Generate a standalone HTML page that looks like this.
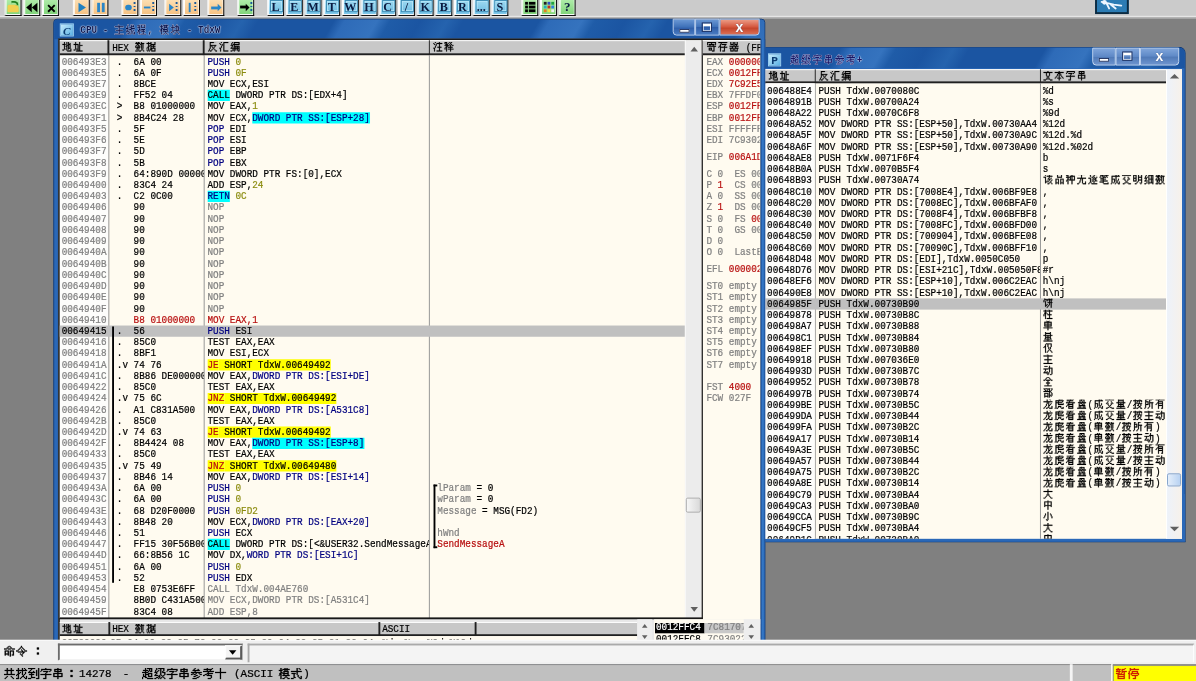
<!DOCTYPE html>
<html><head><meta charset="utf-8"><title>OllyDbg</title>
<style>
html,body{margin:0;padding:0;overflow:hidden;width:1196px;height:681px;background:#808080}
#root{position:absolute;left:0;top:0;width:1280px;height:728px;transform:scale(0.934375,0.93544);transform-origin:0 0;background:#808080;overflow:hidden}
#root div{position:absolute;box-sizing:border-box}
.m{font-family:"Liberation Mono",monospace;font-size:11.67px;line-height:12px;white-space:pre;overflow:hidden;color:#000}
.cj{width:12px;height:12px;vertical-align:top;fill:currentColor;display:inline-block;margin-right:0}
.g{color:#808080}
.k{color:#000}
.nv{color:#000080}
.ol{color:#8c8c10}
.rd{color:#ff0000}
.dr{color:#b81010}
.cy{background:#00ffff}
.yl{background:#ffff00}
.sel{background:#c0c0c0}
.hdr{background:#c8c8c8;border-top:1px solid #fff;border-bottom:2px solid #202020}
.vd{background:#202020}
.ic{position:absolute;left:0;top:0;width:13px;height:13px;font:bold 12px "Liberation Serif",serif;color:#0a3a70;text-align:center;line-height:14px;font-style:italic}
.ttl{font-family:"Liberation Mono",monospace;font-size:11.67px;font-weight:bold;line-height:12px;white-space:pre;color:#0c1850;text-shadow:0 0 1px #e8f0ff,0 0 1px #e8f0ff,0 0 2px #b0c8f0}
.ttl .cj{width:14px;filter:drop-shadow(0 0 0.6px #e8f0ff) drop-shadow(0 0 0.6px #c8dcff)}
.bmin{position:absolute;left:6px;top:10px;width:11px;height:4px;background:#fff;border:1px solid #1c3060}
.bmax{position:absolute;left:6px;top:3px;width:11px;height:10px;border:1px solid #1c3060;background:transparent;box-shadow:inset 0 3px 0 #fff,inset 0 -1px 0 #fff,inset 1px 0 0 #fff,inset -1px 0 0 #fff}
.bx{position:absolute;left:0;top:0;width:100%;text-align:center;font:bold 15px/16px "Liberation Sans",sans-serif;color:#fff;text-shadow:0 0 1px #304070}
.tbl{position:absolute;left:0;top:0;width:100%;text-align:center;font:bold 13px/19px "Liberation Serif",serif;color:#0a1a40}
.arr{position:absolute;width:0;height:0;border-left:5px solid transparent;border-right:5px solid transparent}
.arr.up{border-bottom:5px solid #606060}
.arr.dn{border-top:5px solid #606060}
.emp{font-family:"Liberation Serif",serif;font-size:10px}
.sx{display:inline-block;transform:scaleX(0.857143);transform-origin:0 0;white-space:pre}
.sx .cj{width:14px}
.tri{position:absolute;width:0;height:0;border-style:solid}
.tri.l{border-width:4px 6px 4px 0;border-color:transparent #000 transparent transparent}
.tri.r{border-width:4px 0 4px 6px;border-color:transparent transparent transparent #000}
.s13{font-family:"Liberation Mono",monospace;font-size:11.67px;line-height:14px;white-space:pre;color:#000}
.s13 .cj{width:13px;height:13px}
.m,.s13{-webkit-text-stroke:0.25px currentColor}
.cj{stroke:currentColor;stroke-width:0.25px}
.m .cj{position:relative;top:-1px}

</style></head><body>
<svg width="0" height="0" style="position:absolute"><defs><symbol id="u4e3b" viewBox="0 0 12 12"><path d="M4 0h1v1h-1zM5 1h1v1h-1zM0 2h11v1h-11zM5 3h1v1h-1zM5 4h1v1h-1zM5 5h1v1h-1zM1 6h9v1h-9zM5 7h1v1h-1zM5 8h1v1h-1zM5 9h1v1h-1zM0 10h11v1h-11z"/></symbol><symbol id="u7ebf" viewBox="0 0 12 12"><path d="M2 0h1v1h-1zM6 0h1v1h-1zM8 0h1v1h-1zM2 1h1v1h-1zM6 1h1v1h-1zM9 1h1v1h-1zM1 2h1v1h-1zM6 2h4v1h-4zM1 3h1v1h-1zM4 3h3v1h-3zM0 4h3v1h-3zM6 4h5v1h-5zM2 5h1v1h-1zM4 5h3v1h-3zM1 6h1v1h-1zM6 6h1v1h-1zM9 6h1v1h-1zM0 7h4v1h-4zM6 7h1v1h-1zM8 7h1v1h-1zM4 8h1v1h-1zM7 8h1v1h-1zM10 8h1v1h-1zM2 9h2v1h-2zM6 9h1v1h-1zM8 9h1v1h-1zM10 9h1v1h-1zM0 10h2v1h-2zM4 10h2v1h-2zM9 10h2v1h-2z"/></symbol><symbol id="u7a0b" viewBox="0 0 12 12"><path d="M3 0h1v1h-1zM5 0h5v1h-5zM0 1h3v1h-3zM5 1h1v1h-1zM9 1h1v1h-1zM2 2h1v1h-1zM5 2h1v1h-1zM9 2h1v1h-1zM0 3h4v1h-4zM5 3h5v1h-5zM2 4h1v1h-1zM2 5h2v1h-2zM5 5h5v1h-5zM1 6h2v1h-2zM4 6h1v1h-1zM7 6h1v1h-1zM1 7h2v1h-2zM5 7h5v1h-5zM0 8h1v1h-1zM2 8h1v1h-1zM7 8h1v1h-1zM2 9h1v1h-1zM7 9h1v1h-1zM2 10h1v1h-1zM4 10h7v1h-7z"/></symbol><symbol id="u6a21" viewBox="0 0 12 12"><path d="M2 0h1v1h-1zM6 0h1v1h-1zM8 0h1v1h-1zM2 1h1v1h-1zM4 1h7v1h-7zM0 2h4v1h-4zM6 2h1v1h-1zM8 2h1v1h-1zM2 3h1v1h-1zM5 3h5v1h-5zM2 4h2v1h-2zM5 4h1v1h-1zM9 4h1v1h-1zM1 5h2v1h-2zM4 5h6v1h-6zM1 6h2v1h-2zM5 6h1v1h-1zM9 6h1v1h-1zM0 7h1v1h-1zM2 7h1v1h-1zM4 7h7v1h-7zM2 8h1v1h-1zM7 8h1v1h-1zM2 9h1v1h-1zM6 9h1v1h-1zM8 9h1v1h-1zM2 10h1v1h-1zM4 10h2v1h-2zM9 10h2v1h-2z"/></symbol><symbol id="u5757" viewBox="0 0 12 12"><path d="M2 0h1v1h-1zM7 0h1v1h-1zM2 1h1v1h-1zM7 1h1v1h-1zM2 2h1v1h-1zM5 2h5v1h-5zM0 3h5v1h-5zM7 3h1v1h-1zM9 3h1v1h-1zM2 4h1v1h-1zM7 4h1v1h-1zM9 4h1v1h-1zM2 5h1v1h-1zM7 5h1v1h-1zM9 5h1v1h-1zM2 6h1v1h-1zM4 6h7v1h-7zM2 7h2v1h-2zM7 7h1v1h-1zM0 8h2v1h-2zM6 8h1v1h-1zM8 8h1v1h-1zM5 9h1v1h-1zM9 9h1v1h-1zM3 10h2v1h-2zM10 10h1v1h-1z"/></symbol><symbol id="u5730" viewBox="0 0 12 12"><path d="M2 0h1v1h-1zM7 0h1v1h-1zM2 1h1v1h-1zM5 1h1v1h-1zM7 1h1v1h-1zM2 2h1v1h-1zM5 2h1v1h-1zM7 2h1v1h-1zM9 2h1v1h-1zM0 3h4v1h-4zM5 3h1v1h-1zM7 3h3v1h-3zM2 4h1v1h-1zM5 4h3v1h-3zM9 4h1v1h-1zM2 5h1v1h-1zM4 5h2v1h-2zM7 5h1v1h-1zM9 5h1v1h-1zM2 6h1v1h-1zM5 6h1v1h-1zM7 6h1v1h-1zM9 6h1v1h-1zM2 7h1v1h-1zM5 7h1v1h-1zM7 7h3v1h-3zM2 8h2v1h-2zM5 8h1v1h-1zM7 8h1v1h-1zM10 8h1v1h-1zM0 9h2v1h-2zM5 9h1v1h-1zM10 9h1v1h-1zM6 10h5v1h-5z"/></symbol><symbol id="u5740" viewBox="0 0 12 12"><path d="M2 0h1v1h-1zM7 0h1v1h-1zM2 1h1v1h-1zM7 1h1v1h-1zM2 2h1v1h-1zM7 2h1v1h-1zM0 3h6v1h-6zM7 3h1v1h-1zM2 4h1v1h-1zM5 4h1v1h-1zM7 4h4v1h-4zM2 5h1v1h-1zM5 5h1v1h-1zM7 5h1v1h-1zM2 6h1v1h-1zM5 6h1v1h-1zM7 6h1v1h-1zM2 7h1v1h-1zM5 7h1v1h-1zM7 7h1v1h-1zM2 8h4v1h-4zM7 8h1v1h-1zM0 9h2v1h-2zM5 9h1v1h-1zM7 9h1v1h-1zM3 10h8v1h-8z"/></symbol><symbol id="u6570" viewBox="0 0 12 12"><path d="M0 0h1v1h-1zM3 0h1v1h-1zM5 0h1v1h-1zM7 0h1v1h-1zM1 1h1v1h-1zM3 1h2v1h-2zM7 1h1v1h-1zM0 2h6v1h-6zM7 2h4v1h-4zM2 3h2v1h-2zM6 3h2v1h-2zM9 3h1v1h-1zM1 4h1v1h-1zM3 4h2v1h-2zM7 4h1v1h-1zM9 4h1v1h-1zM0 5h1v1h-1zM3 5h1v1h-1zM5 5h1v1h-1zM7 5h1v1h-1zM9 5h1v1h-1zM0 6h6v1h-6zM7 6h1v1h-1zM9 6h1v1h-1zM2 7h1v1h-1zM4 7h1v1h-1zM7 7h1v1h-1zM9 7h1v1h-1zM1 8h2v1h-2zM4 8h1v1h-1zM8 8h1v1h-1zM3 9h1v1h-1zM7 9h1v1h-1zM9 9h1v1h-1zM0 10h3v1h-3zM4 10h3v1h-3zM10 10h1v1h-1z"/></symbol><symbol id="u636e" viewBox="0 0 12 12"><path d="M2 0h1v1h-1zM5 0h6v1h-6zM2 1h1v1h-1zM5 1h1v1h-1zM10 1h1v1h-1zM0 2h6v1h-6zM10 2h1v1h-1zM2 3h1v1h-1zM5 3h6v1h-6zM2 4h1v1h-1zM4 4h2v1h-2zM8 4h1v1h-1zM2 5h2v1h-2zM5 5h6v1h-6zM1 6h2v1h-2zM5 6h1v1h-1zM8 6h1v1h-1zM0 7h1v1h-1zM2 7h1v1h-1zM5 7h6v1h-6zM2 8h1v1h-1zM4 8h3v1h-3zM10 8h1v1h-1zM0 9h1v1h-1zM2 9h1v1h-1zM4 9h1v1h-1zM6 9h1v1h-1zM10 9h1v1h-1zM1 10h1v1h-1zM3 10h1v1h-1zM6 10h5v1h-5z"/></symbol><symbol id="u53cd" viewBox="0 0 12 12"><path d="M7 0h3v1h-3zM2 1h5v1h-5zM2 2h1v1h-1zM2 3h1v1h-1zM2 4h8v1h-8zM2 5h1v1h-1zM4 5h1v1h-1zM8 5h1v1h-1zM2 6h1v1h-1zM5 6h1v1h-1zM7 6h1v1h-1zM2 7h1v1h-1zM6 7h1v1h-1zM1 8h1v1h-1zM5 8h1v1h-1zM7 8h1v1h-1zM1 9h1v1h-1zM4 9h1v1h-1zM8 9h1v1h-1zM0 10h1v1h-1zM2 10h2v1h-2zM9 10h2v1h-2z"/></symbol><symbol id="u6c47" viewBox="0 0 12 12"><path d="M1 0h1v1h-1zM2 1h1v1h-1zM5 1h6v1h-6zM0 2h1v1h-1zM5 2h1v1h-1zM1 3h1v1h-1zM3 3h1v1h-1zM5 3h1v1h-1zM3 4h1v1h-1zM5 4h1v1h-1zM2 5h1v1h-1zM5 5h1v1h-1zM2 6h1v1h-1zM5 6h1v1h-1zM0 7h2v1h-2zM5 7h1v1h-1zM1 8h1v1h-1zM5 8h1v1h-1zM1 9h1v1h-1zM5 9h1v1h-1zM1 10h1v1h-1zM5 10h6v1h-6z"/></symbol><symbol id="u7f16" viewBox="0 0 12 12"><path d="M2 0h1v1h-1zM7 0h1v1h-1zM2 1h1v1h-1zM4 1h7v1h-7zM1 2h1v1h-1zM4 2h1v1h-1zM10 2h1v1h-1zM1 3h1v1h-1zM3 3h8v1h-8zM0 4h3v1h-3zM4 4h1v1h-1zM2 5h1v1h-1zM4 5h7v1h-7zM1 6h1v1h-1zM4 6h1v1h-1zM6 6h1v1h-1zM8 6h1v1h-1zM10 6h1v1h-1zM0 7h11v1h-11zM4 8h1v1h-1zM6 8h1v1h-1zM8 8h1v1h-1zM10 8h1v1h-1zM2 9h3v1h-3zM6 9h1v1h-1zM8 9h1v1h-1zM10 9h1v1h-1zM0 10h2v1h-2zM4 10h1v1h-1zM9 10h2v1h-2z"/></symbol><symbol id="u6ce8" viewBox="0 0 12 12"><path d="M1 0h1v1h-1zM6 0h1v1h-1zM2 1h1v1h-1zM7 1h1v1h-1zM0 2h1v1h-1zM4 2h7v1h-7zM1 3h1v1h-1zM3 3h1v1h-1zM7 3h1v1h-1zM3 4h1v1h-1zM7 4h1v1h-1zM2 5h1v1h-1zM7 5h1v1h-1zM2 6h1v1h-1zM5 6h5v1h-5zM0 7h2v1h-2zM7 7h1v1h-1zM1 8h1v1h-1zM7 8h1v1h-1zM1 9h1v1h-1zM7 9h1v1h-1zM1 10h1v1h-1zM4 10h7v1h-7z"/></symbol><symbol id="u91ca" viewBox="0 0 12 12"><path d="M3 0h7v1h-7zM0 1h3v1h-3zM6 1h1v1h-1zM8 1h1v1h-1zM0 2h1v1h-1zM2 2h1v1h-1zM4 2h1v1h-1zM7 2h1v1h-1zM1 3h3v1h-3zM6 3h1v1h-1zM8 3h1v1h-1zM0 4h6v1h-6zM7 4h1v1h-1zM9 4h2v1h-2zM2 5h2v1h-2zM7 5h1v1h-1zM1 6h2v1h-2zM4 6h6v1h-6zM0 7h1v1h-1zM2 7h1v1h-1zM7 7h1v1h-1zM0 8h1v1h-1zM2 8h1v1h-1zM4 8h7v1h-7zM2 9h1v1h-1zM7 9h1v1h-1zM2 10h1v1h-1zM7 10h1v1h-1z"/></symbol><symbol id="u5bc4" viewBox="0 0 12 12"><path d="M5 0h1v1h-1zM0 1h11v1h-11zM0 2h1v1h-1zM5 2h1v1h-1zM10 2h1v1h-1zM0 3h1v1h-1zM2 3h7v1h-7zM10 3h1v1h-1zM3 4h1v1h-1zM7 4h1v1h-1zM0 5h11v1h-11zM8 6h1v1h-1zM2 7h4v1h-4zM8 7h1v1h-1zM2 8h1v1h-1zM5 8h1v1h-1zM8 8h1v1h-1zM2 9h4v1h-4zM8 9h1v1h-1zM6 10h3v1h-3z"/></symbol><symbol id="u5b58" viewBox="0 0 12 12"><path d="M4 0h1v1h-1zM0 1h11v1h-11zM3 2h1v1h-1zM2 3h1v1h-1zM4 3h6v1h-6zM2 4h1v1h-1zM8 4h1v1h-1zM1 5h2v1h-2zM7 5h1v1h-1zM0 6h1v1h-1zM2 6h9v1h-9zM2 7h1v1h-1zM7 7h1v1h-1zM2 8h1v1h-1zM7 8h1v1h-1zM2 9h1v1h-1zM7 9h1v1h-1zM2 10h1v1h-1zM5 10h3v1h-3z"/></symbol><symbol id="u5668" viewBox="0 0 12 12"><path d="M1 0h4v1h-4zM6 0h4v1h-4zM1 1h1v1h-1zM4 1h1v1h-1zM6 1h1v1h-1zM9 1h1v1h-1zM1 2h1v1h-1zM4 2h1v1h-1zM6 2h1v1h-1zM9 2h1v1h-1zM1 3h4v1h-4zM6 3h4v1h-4zM5 4h1v1h-1zM8 4h1v1h-1zM0 5h11v1h-11zM3 6h1v1h-1zM7 6h1v1h-1zM0 7h5v1h-5zM6 7h5v1h-5zM1 8h1v1h-1zM4 8h1v1h-1zM6 8h1v1h-1zM9 8h1v1h-1zM1 9h1v1h-1zM4 9h1v1h-1zM6 9h1v1h-1zM9 9h1v1h-1zM1 10h4v1h-4zM6 10h4v1h-4z"/></symbol><symbol id="u8d85" viewBox="0 0 12 12"><path d="M3 0h1v1h-1zM5 0h5v1h-5zM3 1h1v1h-1zM7 1h1v1h-1zM9 1h1v1h-1zM1 2h5v1h-5zM7 2h1v1h-1zM9 2h1v1h-1zM3 3h1v1h-1zM6 3h1v1h-1zM8 3h2v1h-2zM0 4h6v1h-6zM3 5h1v1h-1zM6 5h4v1h-4zM1 6h1v1h-1zM3 6h4v1h-4zM9 6h1v1h-1zM1 7h1v1h-1zM3 7h1v1h-1zM6 7h1v1h-1zM9 7h1v1h-1zM1 8h3v1h-3zM6 8h4v1h-4zM0 9h1v1h-1zM3 9h2v1h-2zM0 10h1v1h-1zM5 10h6v1h-6z"/></symbol><symbol id="u7ea7" viewBox="0 0 12 12"><path d="M2 0h1v1h-1zM4 0h6v1h-6zM2 1h1v1h-1zM6 1h1v1h-1zM9 1h1v1h-1zM1 2h1v1h-1zM4 2h1v1h-1zM6 2h1v1h-1zM9 2h1v1h-1zM1 3h1v1h-1zM3 3h1v1h-1zM6 3h1v1h-1zM8 3h1v1h-1zM0 4h3v1h-3zM6 4h1v1h-1zM8 4h3v1h-3zM2 5h1v1h-1zM6 5h1v1h-1zM10 5h1v1h-1zM1 6h1v1h-1zM6 6h1v1h-1zM10 6h1v1h-1zM0 7h4v1h-4zM5 7h1v1h-1zM7 7h1v1h-1zM9 7h1v1h-1zM4 8h2v1h-2zM8 8h1v1h-1zM2 9h2v1h-2zM5 9h1v1h-1zM7 9h1v1h-1zM9 9h1v1h-1zM0 10h2v1h-2zM4 10h1v1h-1zM6 10h1v1h-1zM10 10h1v1h-1z"/></symbol><symbol id="u5b57" viewBox="0 0 12 12"><path d="M5 0h1v1h-1zM1 1h10v1h-10zM1 2h1v1h-1zM10 2h1v1h-1zM0 3h1v1h-1zM3 3h5v1h-5zM9 3h1v1h-1zM6 4h1v1h-1zM5 5h1v1h-1zM0 6h11v1h-11zM5 7h1v1h-1zM5 8h1v1h-1zM5 9h1v1h-1zM3 10h3v1h-3z"/></symbol><symbol id="u4e32" viewBox="0 0 12 12"><path d="M5 0h1v1h-1zM2 1h7v1h-7zM2 2h1v1h-1zM5 2h1v1h-1zM8 2h1v1h-1zM2 3h7v1h-7zM5 4h1v1h-1zM1 5h9v1h-9zM1 6h1v1h-1zM5 6h1v1h-1zM9 6h1v1h-1zM1 7h1v1h-1zM5 7h1v1h-1zM9 7h1v1h-1zM1 8h9v1h-9zM5 9h1v1h-1zM5 10h1v1h-1z"/></symbol><symbol id="u53c2" viewBox="0 0 12 12"><path d="M4 0h1v1h-1zM3 1h1v1h-1zM7 1h1v1h-1zM2 2h7v1h-7zM4 3h1v1h-1zM0 4h11v1h-11zM2 5h1v1h-1zM5 5h1v1h-1zM8 5h1v1h-1zM0 6h2v1h-2zM3 6h2v1h-2zM9 6h2v1h-2zM5 7h2v1h-2zM3 8h2v1h-2zM8 8h1v1h-1zM6 9h2v1h-2zM2 10h4v1h-4z"/></symbol><symbol id="u8003" viewBox="0 0 12 12"><path d="M4 0h1v1h-1zM9 0h1v1h-1zM1 1h8v1h-8zM4 2h1v1h-1zM7 2h1v1h-1zM0 3h11v1h-11zM5 4h1v1h-1zM4 5h6v1h-6zM2 6h2v1h-2zM5 6h1v1h-1zM0 7h2v1h-2zM4 7h5v1h-5zM8 8h1v1h-1zM8 9h1v1h-1zM5 10h3v1h-3z"/></symbol><symbol id="u6587" viewBox="0 0 12 12"><path d="M4 0h1v1h-1zM5 1h1v1h-1zM0 2h11v1h-11zM3 3h1v1h-1zM7 3h1v1h-1zM3 4h1v1h-1zM7 4h1v1h-1zM3 5h1v1h-1zM7 5h1v1h-1zM4 6h1v1h-1zM6 6h1v1h-1zM4 7h1v1h-1zM6 7h1v1h-1zM5 8h1v1h-1zM3 9h2v1h-2zM6 9h2v1h-2zM0 10h3v1h-3zM8 10h3v1h-3z"/></symbol><symbol id="u672c" viewBox="0 0 12 12"><path d="M5 0h1v1h-1zM5 1h1v1h-1zM0 2h11v1h-11zM4 3h3v1h-3zM3 4h1v1h-1zM5 4h1v1h-1zM7 4h1v1h-1zM3 5h1v1h-1zM5 5h1v1h-1zM7 5h1v1h-1zM2 6h1v1h-1zM5 6h1v1h-1zM8 6h1v1h-1zM1 7h1v1h-1zM5 7h1v1h-1zM9 7h1v1h-1zM0 8h1v1h-1zM3 8h5v1h-5zM10 8h1v1h-1zM5 9h1v1h-1zM5 10h1v1h-1z"/></symbol><symbol id="u8be5" viewBox="0 0 12 12"><path d="M1 0h1v1h-1zM6 0h1v1h-1zM2 1h1v1h-1zM7 1h1v1h-1zM4 2h7v1h-7zM0 3h3v1h-3zM7 3h1v1h-1zM2 4h1v1h-1zM6 4h1v1h-1zM9 4h1v1h-1zM2 5h1v1h-1zM5 5h4v1h-4zM2 6h1v1h-1zM7 6h1v1h-1zM10 6h1v1h-1zM2 7h1v1h-1zM4 7h1v1h-1zM6 7h1v1h-1zM9 7h1v1h-1zM2 8h2v1h-2zM5 8h1v1h-1zM8 8h1v1h-1zM2 9h1v1h-1zM7 9h1v1h-1zM9 9h1v1h-1zM5 10h2v1h-2zM10 10h1v1h-1z"/></symbol><symbol id="u54c1" viewBox="0 0 12 12"><path d="M3 0h6v1h-6zM3 1h1v1h-1zM8 1h1v1h-1zM3 2h1v1h-1zM8 2h1v1h-1zM3 3h6v1h-6zM1 5h4v1h-4zM7 5h4v1h-4zM1 6h1v1h-1zM4 6h1v1h-1zM7 6h1v1h-1zM10 6h1v1h-1zM1 7h1v1h-1zM4 7h1v1h-1zM7 7h1v1h-1zM10 7h1v1h-1zM1 8h1v1h-1zM4 8h1v1h-1zM7 8h1v1h-1zM10 8h1v1h-1zM1 9h4v1h-4zM7 9h4v1h-4zM1 10h1v1h-1zM4 10h1v1h-1zM7 10h1v1h-1zM10 10h1v1h-1z"/></symbol><symbol id="u79cd" viewBox="0 0 12 12"><path d="M3 0h2v1h-2zM7 0h1v1h-1zM0 1h3v1h-3zM7 1h1v1h-1zM2 2h1v1h-1zM5 2h6v1h-6zM0 3h6v1h-6zM7 3h1v1h-1zM10 3h1v1h-1zM2 4h1v1h-1zM5 4h1v1h-1zM7 4h1v1h-1zM10 4h1v1h-1zM2 5h2v1h-2zM5 5h1v1h-1zM7 5h1v1h-1zM10 5h1v1h-1zM1 6h2v1h-2zM4 6h7v1h-7zM0 7h1v1h-1zM2 7h1v1h-1zM7 7h1v1h-1zM2 8h1v1h-1zM7 8h1v1h-1zM2 9h1v1h-1zM7 9h1v1h-1zM2 10h1v1h-1zM7 10h1v1h-1z"/></symbol><symbol id="u65e0" viewBox="0 0 12 12"><path d="M1 0h9v1h-9zM5 1h1v1h-1zM5 2h1v1h-1zM5 3h1v1h-1zM0 4h11v1h-11zM4 5h1v1h-1zM6 5h1v1h-1zM4 6h1v1h-1zM6 6h1v1h-1zM3 7h1v1h-1zM6 7h1v1h-1zM3 8h1v1h-1zM6 8h1v1h-1zM10 8h1v1h-1zM2 9h1v1h-1zM6 9h1v1h-1zM10 9h1v1h-1zM0 10h2v1h-2zM7 10h4v1h-4z"/></symbol><symbol id="u9010" viewBox="0 0 12 12"><path d="M1 0h1v1h-1zM4 0h7v1h-7zM2 1h1v1h-1zM7 1h1v1h-1zM2 2h1v1h-1zM6 2h1v1h-1zM4 3h2v1h-2zM7 3h1v1h-1zM10 3h1v1h-1zM0 4h3v1h-3zM6 4h1v1h-1zM8 4h2v1h-2zM2 5h1v1h-1zM4 5h2v1h-2zM7 5h2v1h-2zM2 6h1v1h-1zM6 6h1v1h-1zM8 6h2v1h-2zM2 7h1v1h-1zM4 7h2v1h-2zM8 7h1v1h-1zM10 7h1v1h-1zM2 8h1v1h-1zM6 8h2v1h-2zM1 9h1v1h-1zM3 9h1v1h-1zM0 10h1v1h-1zM4 10h7v1h-7z"/></symbol><symbol id="u7b14" viewBox="0 0 12 12"><path d="M1 0h1v1h-1zM6 0h1v1h-1zM1 1h4v1h-4zM6 1h5v1h-5zM1 2h1v1h-1zM3 2h1v1h-1zM5 2h1v1h-1zM8 2h1v1h-1zM0 3h1v1h-1zM4 3h4v1h-4zM9 3h1v1h-1zM1 4h4v1h-4zM4 5h4v1h-4zM1 6h4v1h-4zM4 7h6v1h-6zM0 8h5v1h-5zM4 9h1v1h-1zM10 9h1v1h-1zM5 10h6v1h-6z"/></symbol><symbol id="u6210" viewBox="0 0 12 12"><path d="M6 0h1v1h-1zM8 0h1v1h-1zM6 1h1v1h-1zM9 1h1v1h-1zM1 2h10v1h-10zM1 3h1v1h-1zM6 3h1v1h-1zM1 4h1v1h-1zM6 4h1v1h-1zM1 5h4v1h-4zM6 5h1v1h-1zM9 5h1v1h-1zM1 6h1v1h-1zM4 6h1v1h-1zM6 6h1v1h-1zM9 6h1v1h-1zM1 7h1v1h-1zM4 7h1v1h-1zM6 7h1v1h-1zM8 7h1v1h-1zM1 8h1v1h-1zM4 8h1v1h-1zM7 8h1v1h-1zM10 8h1v1h-1zM1 9h1v1h-1zM3 9h1v1h-1zM6 9h1v1h-1zM8 9h1v1h-1zM10 9h1v1h-1zM0 10h1v1h-1zM5 10h1v1h-1zM9 10h2v1h-2z"/></symbol><symbol id="u4ea4" viewBox="0 0 12 12"><path d="M5 0h1v1h-1zM0 1h11v1h-11zM3 3h1v1h-1zM7 3h1v1h-1zM2 4h1v1h-1zM8 4h1v1h-1zM1 5h1v1h-1zM3 5h1v1h-1zM7 5h1v1h-1zM9 5h1v1h-1zM3 6h1v1h-1zM7 6h1v1h-1zM4 7h1v1h-1zM6 7h1v1h-1zM5 8h1v1h-1zM3 9h2v1h-2zM6 9h2v1h-2zM1 10h2v1h-2zM8 10h3v1h-3z"/></symbol><symbol id="u660e" viewBox="0 0 12 12"><path d="M6 0h5v1h-5zM0 1h4v1h-4zM6 1h1v1h-1zM10 1h1v1h-1zM0 2h1v1h-1zM3 2h1v1h-1zM6 2h1v1h-1zM10 2h1v1h-1zM0 3h1v1h-1zM3 3h1v1h-1zM6 3h5v1h-5zM0 4h4v1h-4zM6 4h1v1h-1zM10 4h1v1h-1zM0 5h1v1h-1zM3 5h1v1h-1zM6 5h1v1h-1zM10 5h1v1h-1zM0 6h1v1h-1zM3 6h1v1h-1zM6 6h5v1h-5zM0 7h4v1h-4zM6 7h1v1h-1zM10 7h1v1h-1zM5 8h1v1h-1zM10 8h1v1h-1zM4 9h1v1h-1zM8 9h1v1h-1zM10 9h1v1h-1zM2 10h2v1h-2zM9 10h1v1h-1z"/></symbol><symbol id="u7ec6" viewBox="0 0 12 12"><path d="M2 0h1v1h-1zM2 1h1v1h-1zM5 1h6v1h-6zM1 2h1v1h-1zM5 2h1v1h-1zM8 2h1v1h-1zM10 2h1v1h-1zM1 3h1v1h-1zM3 3h1v1h-1zM5 3h1v1h-1zM8 3h1v1h-1zM10 3h1v1h-1zM0 4h3v1h-3zM5 4h1v1h-1zM8 4h1v1h-1zM10 4h1v1h-1zM2 5h1v1h-1zM5 5h6v1h-6zM1 6h1v1h-1zM5 6h1v1h-1zM8 6h1v1h-1zM10 6h1v1h-1zM0 7h4v1h-4zM5 7h1v1h-1zM8 7h1v1h-1zM10 7h1v1h-1zM5 8h1v1h-1zM8 8h1v1h-1zM10 8h1v1h-1zM2 9h2v1h-2zM5 9h6v1h-6zM0 10h2v1h-2zM5 10h1v1h-1zM10 10h1v1h-1z"/></symbol><symbol id="u997c" viewBox="0 0 12 12"><path d="M1 0h1v1h-1zM6 0h1v1h-1zM10 0h1v1h-1zM1 1h1v1h-1zM7 1h1v1h-1zM9 1h1v1h-1zM1 2h10v1h-10zM0 3h1v1h-1zM4 3h1v1h-1zM7 3h1v1h-1zM9 3h1v1h-1zM0 4h1v1h-1zM2 4h1v1h-1zM7 4h1v1h-1zM9 4h1v1h-1zM2 5h1v1h-1zM5 5h6v1h-6zM2 6h1v1h-1zM7 6h1v1h-1zM9 6h1v1h-1zM2 7h1v1h-1zM4 7h1v1h-1zM7 7h1v1h-1zM9 7h1v1h-1zM2 8h2v1h-2zM6 8h1v1h-1zM9 8h1v1h-1zM2 9h1v1h-1zM5 9h1v1h-1zM9 9h1v1h-1zM4 10h1v1h-1zM9 10h1v1h-1z"/></symbol><symbol id="u67f1" viewBox="0 0 12 12"><path d="M2 0h1v1h-1zM6 0h1v1h-1zM2 1h1v1h-1zM7 1h1v1h-1zM0 2h11v1h-11zM2 3h1v1h-1zM7 3h1v1h-1zM1 4h3v1h-3zM7 4h1v1h-1zM1 5h2v1h-2zM4 5h1v1h-1zM7 5h1v1h-1zM0 6h1v1h-1zM2 6h1v1h-1zM5 6h5v1h-5zM0 7h1v1h-1zM2 7h1v1h-1zM7 7h1v1h-1zM2 8h1v1h-1zM7 8h1v1h-1zM2 9h1v1h-1zM7 9h1v1h-1zM2 10h1v1h-1zM4 10h7v1h-7z"/></symbol><symbol id="u5355" viewBox="0 0 12 12"><path d="M3 0h1v1h-1zM7 0h1v1h-1zM4 1h1v1h-1zM6 1h1v1h-1zM1 2h9v1h-9zM1 3h1v1h-1zM5 3h1v1h-1zM9 3h1v1h-1zM1 4h9v1h-9zM1 5h1v1h-1zM5 5h1v1h-1zM9 5h1v1h-1zM1 6h9v1h-9zM5 7h1v1h-1zM0 8h11v1h-11zM5 9h1v1h-1zM5 10h1v1h-1z"/></symbol><symbol id="u91cf" viewBox="0 0 12 12"><path d="M2 0h7v1h-7zM2 1h1v1h-1zM8 1h1v1h-1zM2 2h7v1h-7zM2 3h1v1h-1zM8 3h1v1h-1zM0 4h11v1h-11zM2 5h1v1h-1zM5 5h1v1h-1zM8 5h1v1h-1zM2 6h7v1h-7zM2 7h1v1h-1zM5 7h1v1h-1zM8 7h1v1h-1zM1 8h9v1h-9zM5 9h1v1h-1zM0 10h11v1h-11z"/></symbol><symbol id="u4ec5" viewBox="0 0 12 12"><path d="M3 0h1v1h-1zM3 1h7v1h-7zM2 2h1v1h-1zM5 2h1v1h-1zM9 2h1v1h-1zM2 3h1v1h-1zM5 3h1v1h-1zM9 3h1v1h-1zM1 4h2v1h-2zM5 4h1v1h-1zM9 4h1v1h-1zM0 5h1v1h-1zM2 5h1v1h-1zM6 5h1v1h-1zM8 5h1v1h-1zM2 6h1v1h-1zM6 6h1v1h-1zM8 6h1v1h-1zM2 7h1v1h-1zM7 7h1v1h-1zM2 8h1v1h-1zM6 8h1v1h-1zM8 8h1v1h-1zM2 9h1v1h-1zM5 9h1v1h-1zM9 9h1v1h-1zM2 10h1v1h-1zM4 10h1v1h-1zM10 10h1v1h-1z"/></symbol><symbol id="u52a8" viewBox="0 0 12 12"><path d="M7 0h1v1h-1zM1 1h4v1h-4zM7 1h1v1h-1zM7 2h1v1h-1zM6 3h5v1h-5zM0 4h6v1h-6zM7 4h1v1h-1zM10 4h1v1h-1zM2 5h1v1h-1zM7 5h1v1h-1zM10 5h1v1h-1zM2 6h1v1h-1zM7 6h1v1h-1zM10 6h1v1h-1zM1 7h1v1h-1zM4 7h1v1h-1zM7 7h1v1h-1zM10 7h1v1h-1zM0 8h5v1h-5zM6 8h1v1h-1zM10 8h1v1h-1zM4 9h1v1h-1zM6 9h1v1h-1zM10 9h1v1h-1zM5 10h1v1h-1zM8 10h2v1h-2z"/></symbol><symbol id="u5168" viewBox="0 0 12 12"><path d="M5 0h1v1h-1zM4 1h1v1h-1zM6 1h1v1h-1zM3 2h1v1h-1zM7 2h1v1h-1zM2 3h1v1h-1zM8 3h1v1h-1zM0 4h2v1h-2zM3 4h5v1h-5zM9 4h2v1h-2zM5 5h1v1h-1zM5 6h1v1h-1zM3 7h5v1h-5zM5 8h1v1h-1zM5 9h1v1h-1zM1 10h9v1h-9z"/></symbol><symbol id="u90e8" viewBox="0 0 12 12"><path d="M3 0h1v1h-1zM7 0h4v1h-4zM0 1h8v1h-8zM10 1h1v1h-1zM1 2h1v1h-1zM5 2h1v1h-1zM7 2h1v1h-1zM10 2h1v1h-1zM2 3h1v1h-1zM4 3h1v1h-1zM7 3h1v1h-1zM9 3h1v1h-1zM0 4h9v1h-9zM7 5h1v1h-1zM9 5h1v1h-1zM1 6h5v1h-5zM7 6h1v1h-1zM10 6h1v1h-1zM1 7h1v1h-1zM5 7h1v1h-1zM7 7h1v1h-1zM10 7h1v1h-1zM1 8h1v1h-1zM5 8h1v1h-1zM7 8h2v1h-2zM10 8h1v1h-1zM1 9h5v1h-5zM7 9h1v1h-1zM9 9h1v1h-1zM1 10h1v1h-1zM5 10h1v1h-1zM7 10h1v1h-1z"/></symbol><symbol id="u9f99" viewBox="0 0 12 12"><path d="M4 0h1v1h-1zM7 0h1v1h-1zM4 1h1v1h-1zM8 1h1v1h-1zM4 2h1v1h-1zM0 3h11v1h-11zM4 4h1v1h-1zM6 4h1v1h-1zM4 5h1v1h-1zM6 5h1v1h-1zM9 5h1v1h-1zM3 6h1v1h-1zM6 6h1v1h-1zM8 6h1v1h-1zM3 7h1v1h-1zM6 7h2v1h-2zM2 8h1v1h-1zM6 8h1v1h-1zM10 8h1v1h-1zM1 9h1v1h-1zM5 9h2v1h-2zM10 9h1v1h-1zM0 10h1v1h-1zM3 10h2v1h-2zM7 10h4v1h-4z"/></symbol><symbol id="u864e" viewBox="0 0 12 12"><path d="M5 0h5v1h-5zM5 1h1v1h-1zM1 2h10v1h-10zM1 3h1v1h-1zM4 3h1v1h-1zM9 3h1v1h-1zM1 4h8v1h-8zM1 5h1v1h-1zM4 5h1v1h-1zM10 5h1v1h-1zM1 6h1v1h-1zM4 6h7v1h-7zM1 7h1v1h-1zM1 8h1v1h-1zM4 8h4v1h-4zM1 9h1v1h-1zM4 9h1v1h-1zM7 9h1v1h-1zM10 9h1v1h-1zM0 10h1v1h-1zM2 10h2v1h-2zM8 10h3v1h-3z"/></symbol><symbol id="u770b" viewBox="0 0 12 12"><path d="M1 0h9v1h-9zM5 1h1v1h-1zM1 2h8v1h-8zM4 3h1v1h-1zM0 4h11v1h-11zM3 5h1v1h-1zM8 5h1v1h-1zM2 6h7v1h-7zM1 7h1v1h-1zM3 7h1v1h-1zM8 7h1v1h-1zM0 8h1v1h-1zM3 8h6v1h-6zM3 9h1v1h-1zM8 9h1v1h-1zM3 10h6v1h-6z"/></symbol><symbol id="u76d8" viewBox="0 0 12 12"><path d="M5 0h1v1h-1zM3 1h6v1h-6zM3 2h1v1h-1zM5 2h1v1h-1zM8 2h1v1h-1zM3 3h1v1h-1zM6 3h1v1h-1zM8 3h1v1h-1zM1 4h10v1h-10zM3 5h1v1h-1zM5 5h1v1h-1zM8 5h1v1h-1zM2 6h1v1h-1zM6 6h1v1h-1zM8 6h1v1h-1zM2 7h8v1h-8zM2 8h1v1h-1zM4 8h1v1h-1zM7 8h1v1h-1zM9 8h1v1h-1zM2 9h1v1h-1zM4 9h1v1h-1zM7 9h1v1h-1zM9 9h1v1h-1zM0 10h11v1h-11z"/></symbol><symbol id="u6309" viewBox="0 0 12 12"><path d="M2 0h1v1h-1zM7 0h1v1h-1zM2 1h1v1h-1zM8 1h1v1h-1zM0 2h11v1h-11zM2 3h1v1h-1zM5 3h1v1h-1zM7 3h1v1h-1zM10 3h1v1h-1zM2 4h1v1h-1zM4 4h1v1h-1zM7 4h1v1h-1zM2 5h2v1h-2zM5 5h6v1h-6zM1 6h2v1h-2zM6 6h1v1h-1zM9 6h1v1h-1zM0 7h1v1h-1zM2 7h1v1h-1zM5 7h2v1h-2zM9 7h1v1h-1zM2 8h1v1h-1zM7 8h2v1h-2zM2 9h1v1h-1zM6 9h1v1h-1zM8 9h1v1h-1zM0 10h3v1h-3zM4 10h2v1h-2zM9 10h2v1h-2z"/></symbol><symbol id="u6240" viewBox="0 0 12 12"><path d="M3 0h2v1h-2zM9 0h2v1h-2zM1 1h2v1h-2zM6 1h3v1h-3zM1 2h1v1h-1zM6 2h1v1h-1zM1 3h4v1h-4zM6 3h1v1h-1zM1 4h1v1h-1zM4 4h1v1h-1zM6 4h5v1h-5zM1 5h1v1h-1zM4 5h1v1h-1zM6 5h1v1h-1zM9 5h1v1h-1zM1 6h4v1h-4zM6 6h1v1h-1zM9 6h1v1h-1zM1 7h1v1h-1zM6 7h1v1h-1zM9 7h1v1h-1zM1 8h1v1h-1zM6 8h1v1h-1zM9 8h1v1h-1zM1 9h1v1h-1zM5 9h1v1h-1zM9 9h1v1h-1zM0 10h1v1h-1zM4 10h1v1h-1zM9 10h1v1h-1z"/></symbol><symbol id="u6709" viewBox="0 0 12 12"><path d="M4 0h1v1h-1zM0 1h11v1h-11zM3 2h1v1h-1zM3 3h6v1h-6zM2 4h2v1h-2zM8 4h1v1h-1zM1 5h1v1h-1zM3 5h6v1h-6zM0 6h1v1h-1zM3 6h1v1h-1zM8 6h1v1h-1zM3 7h6v1h-6zM3 8h1v1h-1zM8 8h1v1h-1zM3 9h1v1h-1zM8 9h1v1h-1zM3 10h1v1h-1zM7 10h2v1h-2z"/></symbol><symbol id="u5927" viewBox="0 0 12 12"><path d="M5 0h1v1h-1zM5 1h1v1h-1zM5 2h1v1h-1zM0 3h11v1h-11zM5 4h1v1h-1zM5 5h1v1h-1zM4 6h1v1h-1zM6 6h1v1h-1zM4 7h1v1h-1zM6 7h1v1h-1zM3 8h1v1h-1zM7 8h1v1h-1zM2 9h1v1h-1zM8 9h1v1h-1zM0 10h2v1h-2zM9 10h2v1h-2z"/></symbol><symbol id="u4e2d" viewBox="0 0 12 12"><path d="M5 0h1v1h-1zM5 1h1v1h-1zM1 2h9v1h-9zM1 3h1v1h-1zM5 3h1v1h-1zM9 3h1v1h-1zM1 4h1v1h-1zM5 4h1v1h-1zM9 4h1v1h-1zM1 5h1v1h-1zM5 5h1v1h-1zM9 5h1v1h-1zM1 6h9v1h-9zM1 7h1v1h-1zM5 7h1v1h-1zM9 7h1v1h-1zM5 8h1v1h-1zM5 9h1v1h-1zM5 10h1v1h-1z"/></symbol><symbol id="u5c0f" viewBox="0 0 12 12"><path d="M5 0h1v1h-1zM5 1h1v1h-1zM5 2h1v1h-1zM2 3h1v1h-1zM5 3h1v1h-1zM8 3h1v1h-1zM2 4h1v1h-1zM5 4h1v1h-1zM9 4h1v1h-1zM1 5h1v1h-1zM5 5h1v1h-1zM9 5h1v1h-1zM1 6h1v1h-1zM5 6h1v1h-1zM10 6h1v1h-1zM0 7h1v1h-1zM5 7h1v1h-1zM10 7h1v1h-1zM5 8h1v1h-1zM3 9h1v1h-1zM5 9h1v1h-1zM4 10h1v1h-1z"/></symbol><symbol id="u547d" viewBox="0 0 12 12"><path d="M5 0h1v1h-1zM4 1h1v1h-1zM6 1h1v1h-1zM3 2h1v1h-1zM7 2h1v1h-1zM0 3h3v1h-3zM4 3h3v1h-3zM8 3h3v1h-3zM1 5h4v1h-4zM6 5h4v1h-4zM1 6h1v1h-1zM4 6h1v1h-1zM6 6h1v1h-1zM9 6h1v1h-1zM1 7h1v1h-1zM4 7h1v1h-1zM6 7h1v1h-1zM9 7h1v1h-1zM1 8h4v1h-4zM6 8h1v1h-1zM9 8h1v1h-1zM1 9h1v1h-1zM4 9h1v1h-1zM6 9h1v1h-1zM8 9h2v1h-2zM6 10h1v1h-1z"/></symbol><symbol id="u4ee4" viewBox="0 0 12 12"><path d="M5 0h1v1h-1zM5 1h1v1h-1zM4 2h1v1h-1zM6 2h1v1h-1zM3 3h1v1h-1zM7 3h1v1h-1zM2 4h1v1h-1zM5 4h1v1h-1zM8 4h1v1h-1zM0 5h2v1h-2zM6 5h1v1h-1zM9 5h2v1h-2zM2 6h7v1h-7zM7 7h1v1h-1zM4 8h1v1h-1zM6 8h1v1h-1zM5 9h1v1h-1zM6 10h1v1h-1z"/></symbol><symbol id="uff1a" viewBox="0 0 12 12"><path d="M6 2h2v1h-2zM6 3h2v1h-2zM6 7h2v1h-2zM6 8h2v1h-2z"/></symbol><symbol id="u5171" viewBox="0 0 12 12"><path d="M3 0h1v1h-1zM7 0h1v1h-1zM3 1h1v1h-1zM7 1h1v1h-1zM1 2h9v1h-9zM3 3h1v1h-1zM7 3h1v1h-1zM3 4h1v1h-1zM7 4h1v1h-1zM3 5h1v1h-1zM7 5h1v1h-1zM0 6h11v1h-11zM3 8h1v1h-1zM7 8h1v1h-1zM2 9h1v1h-1zM8 9h1v1h-1zM1 10h1v1h-1zM9 10h1v1h-1z"/></symbol><symbol id="u627e" viewBox="0 0 12 12"><path d="M2 0h1v1h-1zM6 0h1v1h-1zM8 0h1v1h-1zM2 1h1v1h-1zM6 1h1v1h-1zM9 1h1v1h-1zM0 2h11v1h-11zM2 3h1v1h-1zM6 3h1v1h-1zM2 4h1v1h-1zM4 4h1v1h-1zM6 4h1v1h-1zM9 4h1v1h-1zM2 5h2v1h-2zM6 5h1v1h-1zM9 5h1v1h-1zM1 6h2v1h-2zM6 6h1v1h-1zM8 6h1v1h-1zM0 7h1v1h-1zM2 7h1v1h-1zM7 7h1v1h-1zM2 8h1v1h-1zM6 8h2v1h-2zM10 8h1v1h-1zM2 9h1v1h-1zM5 9h1v1h-1zM8 9h1v1h-1zM10 9h1v1h-1zM0 10h3v1h-3zM4 10h1v1h-1zM9 10h2v1h-2z"/></symbol><symbol id="u5230" viewBox="0 0 12 12"><path d="M0 0h7v1h-7zM10 0h1v1h-1zM3 1h1v1h-1zM10 1h1v1h-1zM2 2h1v1h-1zM8 2h1v1h-1zM10 2h1v1h-1zM1 3h1v1h-1zM5 3h1v1h-1zM8 3h1v1h-1zM10 3h1v1h-1zM0 4h7v1h-7zM8 4h1v1h-1zM10 4h1v1h-1zM3 5h1v1h-1zM8 5h1v1h-1zM10 5h1v1h-1zM1 6h5v1h-5zM8 6h1v1h-1zM10 6h1v1h-1zM3 7h1v1h-1zM8 7h1v1h-1zM10 7h1v1h-1zM3 8h1v1h-1zM10 8h1v1h-1zM3 9h4v1h-4zM10 9h1v1h-1zM0 10h3v1h-3zM8 10h3v1h-3z"/></symbol><symbol id="u5341" viewBox="0 0 12 12"><path d="M5 0h1v1h-1zM5 1h1v1h-1zM5 2h1v1h-1zM5 3h1v1h-1zM0 4h11v1h-11zM5 5h1v1h-1zM5 6h1v1h-1zM5 7h1v1h-1zM5 8h1v1h-1zM5 9h1v1h-1zM5 10h1v1h-1z"/></symbol><symbol id="u5f0f" viewBox="0 0 12 12"><path d="M6 0h1v1h-1zM8 0h1v1h-1zM6 1h1v1h-1zM9 1h1v1h-1zM6 2h1v1h-1zM0 3h11v1h-11zM6 4h1v1h-1zM1 5h4v1h-4zM6 5h1v1h-1zM3 6h1v1h-1zM6 6h1v1h-1zM3 7h1v1h-1zM7 7h1v1h-1zM3 8h1v1h-1zM7 8h1v1h-1zM10 8h1v1h-1zM3 9h2v1h-2zM8 9h1v1h-1zM10 9h1v1h-1zM0 10h3v1h-3zM9 10h2v1h-2z"/></symbol><symbol id="u6682" viewBox="0 0 12 12"><path d="M2 0h1v1h-1zM9 0h1v1h-1zM0 1h5v1h-5zM6 1h3v1h-3zM1 2h1v1h-1zM3 2h1v1h-1zM6 2h1v1h-1zM0 3h5v1h-5zM6 3h5v1h-5zM3 4h1v1h-1zM6 4h1v1h-1zM8 4h1v1h-1zM0 5h4v1h-4zM5 5h1v1h-1zM8 5h1v1h-1zM2 6h7v1h-7zM2 7h1v1h-1zM8 7h1v1h-1zM2 8h7v1h-7zM2 9h1v1h-1zM8 9h1v1h-1zM2 10h7v1h-7z"/></symbol><symbol id="u505c" viewBox="0 0 12 12"><path d="M2 0h1v1h-1zM6 0h1v1h-1zM2 1h9v1h-9zM2 2h1v1h-1zM1 3h1v1h-1zM4 3h6v1h-6zM1 4h1v1h-1zM4 4h1v1h-1zM9 4h1v1h-1zM0 5h2v1h-2zM3 5h8v1h-8zM1 6h1v1h-1zM3 6h1v1h-1zM10 6h1v1h-1zM1 7h1v1h-1zM4 7h6v1h-6zM1 8h1v1h-1zM7 8h1v1h-1zM1 9h1v1h-1zM7 9h1v1h-1zM1 10h1v1h-1zM5 10h3v1h-3z"/></symbol></defs></svg>
<div id="root">
<div style="left:0px;top:0px;width:1280px;height:17.5px;background:#cbcbcb"></div><div style="left:0px;top:17.2px;width:1280px;height:1.1px;background:#f8f8f8"></div><div style="left:0px;top:18.3px;width:1280px;height:2.0px;background:#b4b4b4"></div><div style="left:5px;top:-3px;width:18px;height:20px;background:linear-gradient(#b4eeae,#7fd478);border-left:1px solid #fff;border-top:1px solid #fff;border-right:1.5px solid #000;border-bottom:1.5px solid #000;box-shadow:inset 1px 0 0 #fff,inset 0 -1px 0 #fff,inset -1px 0 0 rgba(255,255,255,.6)"><div style="left:2px;top:7px;width:12px;height:8px;background:#f0d050;border-radius:2px 4px 1px 1px"></div><div style="left:6px;top:3px;width:8px;height:5px;border-top:2px solid #208020;border-right:2px solid #208020;border-radius:0 5px 0 0"></div></div><div style="left:25px;top:-3px;width:18px;height:20px;background:linear-gradient(#b4eeae,#7fd478);border-left:1px solid #fff;border-top:1px solid #fff;border-right:1.5px solid #000;border-bottom:1.5px solid #000;box-shadow:inset 1px 0 0 #fff,inset 0 -1px 0 #fff,inset -1px 0 0 rgba(255,255,255,.6)"><div class="tri l" style="left:2px;top:5px;border-width:5px 6px 5px 0"></div><div class="tri l" style="left:8px;top:5px;border-width:5px 6px 5px 0"></div></div><div style="left:45px;top:-3px;width:18px;height:20px;background:linear-gradient(#b4eeae,#7fd478);border-left:1px solid #fff;border-top:1px solid #fff;border-right:1.5px solid #000;border-bottom:1.5px solid #000;box-shadow:inset 1px 0 0 #fff,inset 0 -1px 0 #fff,inset -1px 0 0 rgba(255,255,255,.6)"><div style="left:3.5px;top:9.5px;width:10px;height:2px;background:#000;transform:rotate(45deg)"></div><div style="left:3.5px;top:9.5px;width:10px;height:2px;background:#000;transform:rotate(-45deg)"></div></div><div style="left:78px;top:-3px;width:18px;height:20px;background:linear-gradient(#fde2b8,#f5c080);border-left:1px solid #fff;border-top:1px solid #fff;border-right:1.5px solid #000;border-bottom:1.5px solid #000;box-shadow:inset 1px 0 0 #fff,inset 0 -1px 0 #fff,inset -1px 0 0 rgba(255,255,255,.6)"><div class="tri r" style="left:5px;top:5px;border-left-color:#2080c0;border-width:5px 0 5px 8px"></div></div><div style="left:98px;top:-3px;width:18px;height:20px;background:linear-gradient(#fde2b8,#f5c080);border-left:1px solid #fff;border-top:1px solid #fff;border-right:1.5px solid #000;border-bottom:1.5px solid #000;box-shadow:inset 1px 0 0 #fff,inset 0 -1px 0 #fff,inset -1px 0 0 rgba(255,255,255,.6)"><div style="left:5px;top:5px;width:3px;height:10px;background:#2a86c8"></div><div style="left:10px;top:5px;width:3px;height:10px;background:#2a86c8"></div></div><div style="left:130px;top:-3px;width:18px;height:20px;background:linear-gradient(#fde2b8,#f5c080);border-left:1px solid #fff;border-top:1px solid #fff;border-right:1.5px solid #000;border-bottom:1.5px solid #000;box-shadow:inset 1px 0 0 #fff,inset 0 -1px 0 #fff,inset -1px 0 0 rgba(255,255,255,.6)"><div style="left:3px;top:7px;width:7px;height:6px;background:#2a86c8;border-radius:3px"></div><div style="left:12px;top:4px;width:2px;height:12px;background:repeating-linear-gradient(#1a5a9a 0 2px,transparent 2px 4px)"></div></div><div style="left:150px;top:-3px;width:18px;height:20px;background:linear-gradient(#fde2b8,#f5c080);border-left:1px solid #fff;border-top:1px solid #fff;border-right:1.5px solid #000;border-bottom:1.5px solid #000;box-shadow:inset 1px 0 0 #fff,inset 0 -1px 0 #fff,inset -1px 0 0 rgba(255,255,255,.6)"><div style="left:3px;top:9px;width:7px;height:2px;background:#2a86c8"></div><div style="left:12px;top:4px;width:2px;height:12px;background:repeating-linear-gradient(#1a5a9a 0 2px,transparent 2px 4px)"></div></div><div style="left:176px;top:-3px;width:18px;height:20px;background:linear-gradient(#fde2b8,#f5c080);border-left:1px solid #fff;border-top:1px solid #fff;border-right:1.5px solid #000;border-bottom:1.5px solid #000;box-shadow:inset 1px 0 0 #fff,inset 0 -1px 0 #fff,inset -1px 0 0 rgba(255,255,255,.6)"><div class="tri r" style="left:4px;top:6px;border-left-color:#2a86c8;border-width:4px 0 4px 5px"></div><div style="left:11px;top:4px;width:2px;height:12px;background:repeating-linear-gradient(#1a5a9a 0 2px,transparent 2px 4px)"></div></div><div style="left:196px;top:-3px;width:18px;height:20px;background:linear-gradient(#fde2b8,#f5c080);border-left:1px solid #fff;border-top:1px solid #fff;border-right:1.5px solid #000;border-bottom:1.5px solid #000;box-shadow:inset 1px 0 0 #fff,inset 0 -1px 0 #fff,inset -1px 0 0 rgba(255,255,255,.6)"><div style="left:5px;top:5px;width:2px;height:10px;background:#2a86c8"></div><div style="left:11px;top:4px;width:2px;height:12px;background:repeating-linear-gradient(#1a5a9a 0 2px,transparent 2px 4px)"></div></div><div style="left:222px;top:-3px;width:18px;height:20px;background:linear-gradient(#fde2b8,#f5c080);border-left:1px solid #fff;border-top:1px solid #fff;border-right:1.5px solid #000;border-bottom:1.5px solid #000;box-shadow:inset 1px 0 0 #fff,inset 0 -1px 0 #fff,inset -1px 0 0 rgba(255,255,255,.6)"><div style="left:3px;top:9px;width:8px;height:3px;background:#2a86c8"></div><div class="tri r" style="left:10px;top:6px;border-left-color:#2a86c8;border-width:4px 0 4px 4px"></div></div><div style="left:254px;top:-3px;width:18px;height:20px;background:linear-gradient(#b4eeae,#7fd478);border-left:1px solid #fff;border-top:1px solid #fff;border-right:1.5px solid #000;border-bottom:1.5px solid #000;box-shadow:inset 1px 0 0 #fff,inset 0 -1px 0 #fff,inset -1px 0 0 rgba(255,255,255,.6)"><div style="left:2px;top:8px;width:7px;height:3px;background:#000"></div><div class="tri r" style="left:8px;top:6px;border-width:4px 0 4px 4px"></div><div style="left:13px;top:4px;width:2px;height:12px;background:repeating-linear-gradient(#1a5a9a 0 2px,transparent 2px 4px)"></div></div><div style="left:286px;top:-3px;width:18px;height:20px;background:linear-gradient(#b8e4f8,#78c6ea);border-left:1px solid #fff;border-top:1px solid #fff;border-right:1.5px solid #000;border-bottom:1.5px solid #000;box-shadow:inset 1px 0 0 #fff,inset 0 -1px 0 #fff,inset -1px 0 0 rgba(255,255,255,.6)"><div style="left:1.5px;top:2px;width:14px;height:13px;border:1px solid #3c8cb4;background:linear-gradient(#9cd8f0,#74c0e4);box-shadow:inset 0 0 0 1px #b8e8fa"></div><div class="tbl">L</div></div><div style="left:306px;top:-3px;width:18px;height:20px;background:linear-gradient(#b8e4f8,#78c6ea);border-left:1px solid #fff;border-top:1px solid #fff;border-right:1.5px solid #000;border-bottom:1.5px solid #000;box-shadow:inset 1px 0 0 #fff,inset 0 -1px 0 #fff,inset -1px 0 0 rgba(255,255,255,.6)"><div style="left:1.5px;top:2px;width:14px;height:13px;border:1px solid #3c8cb4;background:linear-gradient(#9cd8f0,#74c0e4);box-shadow:inset 0 0 0 1px #b8e8fa"></div><div class="tbl">E</div></div><div style="left:326px;top:-3px;width:18px;height:20px;background:linear-gradient(#b8e4f8,#78c6ea);border-left:1px solid #fff;border-top:1px solid #fff;border-right:1.5px solid #000;border-bottom:1.5px solid #000;box-shadow:inset 1px 0 0 #fff,inset 0 -1px 0 #fff,inset -1px 0 0 rgba(255,255,255,.6)"><div style="left:1.5px;top:2px;width:14px;height:13px;border:1px solid #3c8cb4;background:linear-gradient(#9cd8f0,#74c0e4);box-shadow:inset 0 0 0 1px #b8e8fa"></div><div class="tbl">M</div></div><div style="left:346px;top:-3px;width:18px;height:20px;background:linear-gradient(#b8e4f8,#78c6ea);border-left:1px solid #fff;border-top:1px solid #fff;border-right:1.5px solid #000;border-bottom:1.5px solid #000;box-shadow:inset 1px 0 0 #fff,inset 0 -1px 0 #fff,inset -1px 0 0 rgba(255,255,255,.6)"><div style="left:1.5px;top:2px;width:14px;height:13px;border:1px solid #3c8cb4;background:linear-gradient(#9cd8f0,#74c0e4);box-shadow:inset 0 0 0 1px #b8e8fa"></div><div class="tbl">T</div></div><div style="left:366px;top:-3px;width:18px;height:20px;background:linear-gradient(#b8e4f8,#78c6ea);border-left:1px solid #fff;border-top:1px solid #fff;border-right:1.5px solid #000;border-bottom:1.5px solid #000;box-shadow:inset 1px 0 0 #fff,inset 0 -1px 0 #fff,inset -1px 0 0 rgba(255,255,255,.6)"><div style="left:1.5px;top:2px;width:14px;height:13px;border:1px solid #3c8cb4;background:linear-gradient(#9cd8f0,#74c0e4);box-shadow:inset 0 0 0 1px #b8e8fa"></div><div class="tbl">W</div></div><div style="left:386px;top:-3px;width:18px;height:20px;background:linear-gradient(#b8e4f8,#78c6ea);border-left:1px solid #fff;border-top:1px solid #fff;border-right:1.5px solid #000;border-bottom:1.5px solid #000;box-shadow:inset 1px 0 0 #fff,inset 0 -1px 0 #fff,inset -1px 0 0 rgba(255,255,255,.6)"><div style="left:1.5px;top:2px;width:14px;height:13px;border:1px solid #3c8cb4;background:linear-gradient(#9cd8f0,#74c0e4);box-shadow:inset 0 0 0 1px #b8e8fa"></div><div class="tbl">H</div></div><div style="left:406px;top:-3px;width:18px;height:20px;background:linear-gradient(#b8e4f8,#78c6ea);border-left:1px solid #fff;border-top:1px solid #fff;border-right:1.5px solid #000;border-bottom:1.5px solid #000;box-shadow:inset 1px 0 0 #fff,inset 0 -1px 0 #fff,inset -1px 0 0 rgba(255,255,255,.6)"><div style="left:1.5px;top:2px;width:14px;height:13px;border:1px solid #3c8cb4;background:linear-gradient(#9cd8f0,#74c0e4);box-shadow:inset 0 0 0 1px #b8e8fa"></div><div class="tbl">C</div></div><div style="left:426px;top:-3px;width:18px;height:20px;background:linear-gradient(#b8e4f8,#78c6ea);border-left:1px solid #fff;border-top:1px solid #fff;border-right:1.5px solid #000;border-bottom:1.5px solid #000;box-shadow:inset 1px 0 0 #fff,inset 0 -1px 0 #fff,inset -1px 0 0 rgba(255,255,255,.6)"><div style="left:1.5px;top:2px;width:14px;height:13px;border:1px solid #3c8cb4;background:linear-gradient(#9cd8f0,#74c0e4);box-shadow:inset 0 0 0 1px #b8e8fa"></div><div class="tbl">/</div></div><div style="left:446px;top:-3px;width:18px;height:20px;background:linear-gradient(#b8e4f8,#78c6ea);border-left:1px solid #fff;border-top:1px solid #fff;border-right:1.5px solid #000;border-bottom:1.5px solid #000;box-shadow:inset 1px 0 0 #fff,inset 0 -1px 0 #fff,inset -1px 0 0 rgba(255,255,255,.6)"><div style="left:1.5px;top:2px;width:14px;height:13px;border:1px solid #3c8cb4;background:linear-gradient(#9cd8f0,#74c0e4);box-shadow:inset 0 0 0 1px #b8e8fa"></div><div class="tbl">K</div></div><div style="left:466px;top:-3px;width:18px;height:20px;background:linear-gradient(#b8e4f8,#78c6ea);border-left:1px solid #fff;border-top:1px solid #fff;border-right:1.5px solid #000;border-bottom:1.5px solid #000;box-shadow:inset 1px 0 0 #fff,inset 0 -1px 0 #fff,inset -1px 0 0 rgba(255,255,255,.6)"><div style="left:1.5px;top:2px;width:14px;height:13px;border:1px solid #3c8cb4;background:linear-gradient(#9cd8f0,#74c0e4);box-shadow:inset 0 0 0 1px #b8e8fa"></div><div class="tbl">B</div></div><div style="left:486px;top:-3px;width:18px;height:20px;background:linear-gradient(#b8e4f8,#78c6ea);border-left:1px solid #fff;border-top:1px solid #fff;border-right:1.5px solid #000;border-bottom:1.5px solid #000;box-shadow:inset 1px 0 0 #fff,inset 0 -1px 0 #fff,inset -1px 0 0 rgba(255,255,255,.6)"><div style="left:1.5px;top:2px;width:14px;height:13px;border:1px solid #3c8cb4;background:linear-gradient(#9cd8f0,#74c0e4);box-shadow:inset 0 0 0 1px #b8e8fa"></div><div class="tbl">R</div></div><div style="left:506px;top:-3px;width:18px;height:20px;background:linear-gradient(#b8e4f8,#78c6ea);border-left:1px solid #fff;border-top:1px solid #fff;border-right:1.5px solid #000;border-bottom:1.5px solid #000;box-shadow:inset 1px 0 0 #fff,inset 0 -1px 0 #fff,inset -1px 0 0 rgba(255,255,255,.6)"><div style="left:1.5px;top:2px;width:14px;height:13px;border:1px solid #3c8cb4;background:linear-gradient(#9cd8f0,#74c0e4);box-shadow:inset 0 0 0 1px #b8e8fa"></div><div class="tbl">...</div></div><div style="left:526px;top:-3px;width:18px;height:20px;background:linear-gradient(#b8e4f8,#78c6ea);border-left:1px solid #fff;border-top:1px solid #fff;border-right:1.5px solid #000;border-bottom:1.5px solid #000;box-shadow:inset 1px 0 0 #fff,inset 0 -1px 0 #fff,inset -1px 0 0 rgba(255,255,255,.6)"><div style="left:1.5px;top:2px;width:14px;height:13px;border:1px solid #3c8cb4;background:linear-gradient(#9cd8f0,#74c0e4);box-shadow:inset 0 0 0 1px #b8e8fa"></div><div class="tbl">S</div></div><div style="left:558px;top:-3px;width:18px;height:20px;background:linear-gradient(#b4eeae,#7fd478);border-left:1px solid #fff;border-top:1px solid #fff;border-right:1.5px solid #000;border-bottom:1.5px solid #000;box-shadow:inset 1px 0 0 #fff,inset 0 -1px 0 #fff,inset -1px 0 0 rgba(255,255,255,.6)"><div style="left:3px;top:4px;width:2.5px;height:2.5px;background:#000"></div><div style="left:6.5px;top:4px;width:7.5px;height:2.5px;background:#000"></div><div style="left:3px;top:8px;width:2.5px;height:2.5px;background:#000"></div><div style="left:6.5px;top:8px;width:7.5px;height:2.5px;background:#000"></div><div style="left:3px;top:12px;width:2.5px;height:2.5px;background:#000"></div><div style="left:6.5px;top:12px;width:7.5px;height:2.5px;background:#000"></div></div><div style="left:578px;top:-3px;width:18px;height:20px;background:linear-gradient(#b4eeae,#7fd478);border-left:1px solid #fff;border-top:1px solid #fff;border-right:1.5px solid #000;border-bottom:1.5px solid #000;box-shadow:inset 1px 0 0 #fff,inset 0 -1px 0 #fff,inset -1px 0 0 rgba(255,255,255,.6)"><div style="left:2.5px;top:3.5px;width:3.5px;height:3.5px;background:#202020"></div><div style="left:6.5px;top:3.5px;width:3.5px;height:3.5px;background:#3050c0"></div><div style="left:10.5px;top:3.5px;width:3.5px;height:3.5px;background:#20a040"></div><div style="left:2.5px;top:7.5px;width:3.5px;height:3.5px;background:#20b0c0"></div><div style="left:6.5px;top:7.5px;width:3.5px;height:3.5px;background:#c03020"></div><div style="left:10.5px;top:7.5px;width:3.5px;height:3.5px;background:#3080e0"></div><div style="left:2.5px;top:11.5px;width:3.5px;height:3.5px;background:#e08020"></div><div style="left:6.5px;top:11.5px;width:3.5px;height:3.5px;background:#f0e040"></div><div style="left:10.5px;top:11.5px;width:3.5px;height:3.5px;background:#f0f0f0"></div></div><div style="left:598px;top:-3px;width:18px;height:20px;background:linear-gradient(#b4eeae,#7fd478);border-left:1px solid #fff;border-top:1px solid #fff;border-right:1.5px solid #000;border-bottom:1.5px solid #000;box-shadow:inset 1px 0 0 #fff,inset 0 -1px 0 #fff,inset -1px 0 0 rgba(255,255,255,.6)"><div class="tbl" style="font-family:'Liberation Serif';font-size:14px;line-height:20px">?</div></div><div style="left:1171.5px;top:-3px;width:36.5px;height:17.5px;background:#2c7cb4;border:2px solid #0c2a40"><svg style="position:absolute;left:0;top:0" width="33" height="14"><path d="M5 3 L10 4 L18 6 L26 7 M10 4 L13 10 M15 6 L20 10" stroke="#eef6ff" stroke-width="2" fill="none" stroke-linecap="round"/><circle cx="8" cy="3.5" r="2.5" fill="#eef6ff"/></svg></div><div style="left:57px;top:19.5px;width:762px;height:700px;background:#2a68b8;border:1px solid #103a78;border-radius:4px 4px 0 0"></div><div style="left:58px;top:20.5px;width:760px;height:21px;background:repeating-linear-gradient(120deg,#1b55a2 0px,#1b55a2 70px,#2e6bb8 80px,#3573be 110px,#1f5ca8 122px,#1b55a2 150px,#2563ae 175px,#1b55a2 190px);border-radius:3px 3px 0 0"></div><div style="left:64px;top:24.5px;width:14.5px;height:14.5px;background:linear-gradient(135deg,#c8ecfc,#58b0e4);border:1px solid #9fd4f4"><div class="ic">C</div></div><div class="ttl" style="left:86px;top:26px;width:420px;height:14px"><span class="sx">CPU - <svg class="cj"><use href="#u4e3b"/></svg><svg class="cj"><use href="#u7ebf"/></svg><svg class="cj"><use href="#u7a0b"/></svg>, <svg class="cj"><use href="#u6a21"/></svg><svg class="cj"><use href="#u5757"/></svg> - TdxW</span></div><div style="left:719.5px;top:20.2px;width:24.5px;height:18px;background:linear-gradient(#6a98d4,#3d70b8 50%,#2c5ca8 51%,#4a7cc2);border:1px solid #c4d6f2;border-radius:0 0 0 4px;"><div class="bmin"></div></div><div style="left:744.0px;top:20.2px;width:25.5px;height:18px;background:linear-gradient(#6a98d4,#3d70b8 50%,#2c5ca8 51%,#4a7cc2);border:1px solid #c4d6f2;"><div class="bmax"></div></div><div style="left:769.5px;top:20.2px;width:43.5px;height:18px;background:linear-gradient(#ec9c86,#d4553c 50%,#c23e24 51%,#dc7258);border:1px solid #c4d6f2;border-radius:0 0 4px 0;"><div class="bx">x</div></div><div style="left:62px;top:41.3px;width:752px;height:660px;background:#3a3a3a"></div><div style="left:63px;top:42.3px;width:751px;height:660px;background:#101010"></div><div style="left:64px;top:43.3px;width:687px;height:618px;background:#fffbf0"></div><div style="left:752px;top:43.3px;width:62px;height:624px;background:#fffbf0"></div><div style="left:64px;top:58.8px;width:52px;height:602px;background:#fdfdfb"></div><div class="hdr" style="left:64px;top:43.3px;width:669px;height:15.5px;"></div><div style="left:115.4px;top:43.3px;width:1.6px;height:15.5px;background:#202020"></div><div style="left:217.4px;top:43.3px;width:1.6px;height:15.5px;background:#202020"></div><div style="left:458.6px;top:43.3px;width:1.6px;height:15.5px;background:#202020"></div><div style="left:115.6px;top:58.8px;width:1.2px;height:602px;background:#909090"></div><div style="left:217.9px;top:58.8px;width:1.2px;height:602px;background:#909090"></div><div style="left:459.1px;top:58.8px;width:1.2px;height:602px;background:#909090"></div><div class="m " style="left:66px;top:45px;width:48px;height:12px;"><span class="sx"><svg class="cj"><use href="#u5730"/></svg><svg class="cj"><use href="#u5740"/></svg></span></div><div class="m " style="left:120px;top:45px;width:96px;height:12px;"><span class="sx">HEX <svg class="cj"><use href="#u6570"/></svg><svg class="cj"><use href="#u636e"/></svg></span></div><div class="m " style="left:222px;top:45px;width:200px;height:12px;"><span class="sx"><svg class="cj"><use href="#u53cd"/></svg><svg class="cj"><use href="#u6c47"/></svg><svg class="cj"><use href="#u7f16"/></svg></span></div><div class="m " style="left:463px;top:45px;width:200px;height:12px;"><span class="sx"><svg class="cj"><use href="#u6ce8"/></svg><svg class="cj"><use href="#u91ca"/></svg></span></div><div class="m g" style="left:66px;top:60.4px;width:50px;height:12px;"><span class="sx">006493E3</span></div><div class="m " style="left:118.7px;top:60.4px;width:99.5px;height:12px;"><span class="sx"> .  6A 00</span></div><div class="m " style="left:221.8px;top:60.4px;width:237.5px;height:12px;"><span class="sx"><span class="nv">PUSH</span> <span class="ol">0</span></span></div><div class="m g" style="left:66px;top:72.4px;width:50px;height:12px;"><span class="sx">006493E5</span></div><div class="m " style="left:118.7px;top:72.4px;width:99.5px;height:12px;"><span class="sx"> .  6A 0F</span></div><div class="m " style="left:221.8px;top:72.4px;width:237.5px;height:12px;"><span class="sx"><span class="nv">PUSH</span> <span class="ol">0F</span></span></div><div class="m g" style="left:66px;top:84.4px;width:50px;height:12px;"><span class="sx">006493E7</span></div><div class="m " style="left:118.7px;top:84.4px;width:99.5px;height:12px;"><span class="sx"> .  8BCE</span></div><div class="m " style="left:221.8px;top:84.4px;width:237.5px;height:12px;"><span class="sx">MOV ECX,ESI</span></div><div class="m g" style="left:66px;top:96.4px;width:50px;height:12px;"><span class="sx">006493E9</span></div><div class="m " style="left:118.7px;top:96.4px;width:99.5px;height:12px;"><span class="sx"> .  FF52 04</span></div><div class="m " style="left:221.8px;top:96.4px;width:237.5px;height:12px;"><span class="sx"><span class="cy">CALL</span> DWORD PTR DS:[EDX+4]</span></div><div class="m g" style="left:66px;top:108.4px;width:50px;height:12px;"><span class="sx">006493EC</span></div><div class="m " style="left:118.7px;top:108.4px;width:99.5px;height:12px;"><span class="sx"> &gt;  B8 01000000</span></div><div class="m " style="left:221.8px;top:108.4px;width:237.5px;height:12px;"><span class="sx">MOV EAX,<span class="ol">1</span></span></div><div class="m g" style="left:66px;top:120.4px;width:50px;height:12px;"><span class="sx">006493F1</span></div><div class="m " style="left:118.7px;top:120.4px;width:99.5px;height:12px;"><span class="sx"> &gt;  8B4C24 28</span></div><div class="m " style="left:221.8px;top:120.4px;width:237.5px;height:12px;"><span class="sx">MOV ECX,<span class="nv cy">DWORD PTR SS:[ESP+28]</span></span></div><div class="m g" style="left:66px;top:132.4px;width:50px;height:12px;"><span class="sx">006493F5</span></div><div class="m " style="left:118.7px;top:132.4px;width:99.5px;height:12px;"><span class="sx"> .  5F</span></div><div class="m " style="left:221.8px;top:132.4px;width:237.5px;height:12px;"><span class="sx"><span class="nv">POP</span> EDI</span></div><div class="m g" style="left:66px;top:144.4px;width:50px;height:12px;"><span class="sx">006493F6</span></div><div class="m " style="left:118.7px;top:144.4px;width:99.5px;height:12px;"><span class="sx"> .  5E</span></div><div class="m " style="left:221.8px;top:144.4px;width:237.5px;height:12px;"><span class="sx"><span class="nv">POP</span> ESI</span></div><div class="m g" style="left:66px;top:156.4px;width:50px;height:12px;"><span class="sx">006493F7</span></div><div class="m " style="left:118.7px;top:156.4px;width:99.5px;height:12px;"><span class="sx"> .  5D</span></div><div class="m " style="left:221.8px;top:156.4px;width:237.5px;height:12px;"><span class="sx"><span class="nv">POP</span> EBP</span></div><div class="m g" style="left:66px;top:168.4px;width:50px;height:12px;"><span class="sx">006493F8</span></div><div class="m " style="left:118.7px;top:168.4px;width:99.5px;height:12px;"><span class="sx"> .  5B</span></div><div class="m " style="left:221.8px;top:168.4px;width:237.5px;height:12px;"><span class="sx"><span class="nv">POP</span> EBX</span></div><div class="m g" style="left:66px;top:180.4px;width:50px;height:12px;"><span class="sx">006493F9</span></div><div class="m " style="left:118.7px;top:180.4px;width:99.5px;height:12px;"><span class="sx"> .  64:890D 00000000</span></div><div class="m " style="left:221.8px;top:180.4px;width:237.5px;height:12px;"><span class="sx">MOV DWORD PTR FS:[0],ECX</span></div><div class="m g" style="left:66px;top:192.4px;width:50px;height:12px;"><span class="sx">00649400</span></div><div class="m " style="left:118.7px;top:192.4px;width:99.5px;height:12px;"><span class="sx"> .  83C4 24</span></div><div class="m " style="left:221.8px;top:192.4px;width:237.5px;height:12px;"><span class="sx">ADD ESP,<span class="ol">24</span></span></div><div class="m g" style="left:66px;top:204.4px;width:50px;height:12px;"><span class="sx">00649403</span></div><div class="m " style="left:118.7px;top:204.4px;width:99.5px;height:12px;"><span class="sx"> .  C2 0C00</span></div><div class="m " style="left:221.8px;top:204.4px;width:237.5px;height:12px;"><span class="sx"><span class="nv cy">RETN</span> <span class="ol">0C</span></span></div><div class="m g" style="left:66px;top:216.4px;width:50px;height:12px;"><span class="sx">00649406</span></div><div class="m " style="left:118.7px;top:216.4px;width:99.5px;height:12px;"><span class="sx">    90</span></div><div class="m " style="left:221.8px;top:216.4px;width:237.5px;height:12px;"><span class="sx"><span class="g">NOP</span></span></div><div class="m g" style="left:66px;top:228.4px;width:50px;height:12px;"><span class="sx">00649407</span></div><div class="m " style="left:118.7px;top:228.4px;width:99.5px;height:12px;"><span class="sx">    90</span></div><div class="m " style="left:221.8px;top:228.4px;width:237.5px;height:12px;"><span class="sx"><span class="g">NOP</span></span></div><div class="m g" style="left:66px;top:240.4px;width:50px;height:12px;"><span class="sx">00649408</span></div><div class="m " style="left:118.7px;top:240.4px;width:99.5px;height:12px;"><span class="sx">    90</span></div><div class="m " style="left:221.8px;top:240.4px;width:237.5px;height:12px;"><span class="sx"><span class="g">NOP</span></span></div><div class="m g" style="left:66px;top:252.4px;width:50px;height:12px;"><span class="sx">00649409</span></div><div class="m " style="left:118.7px;top:252.4px;width:99.5px;height:12px;"><span class="sx">    90</span></div><div class="m " style="left:221.8px;top:252.4px;width:237.5px;height:12px;"><span class="sx"><span class="g">NOP</span></span></div><div class="m g" style="left:66px;top:264.4px;width:50px;height:12px;"><span class="sx">0064940A</span></div><div class="m " style="left:118.7px;top:264.4px;width:99.5px;height:12px;"><span class="sx">    90</span></div><div class="m " style="left:221.8px;top:264.4px;width:237.5px;height:12px;"><span class="sx"><span class="g">NOP</span></span></div><div class="m g" style="left:66px;top:276.4px;width:50px;height:12px;"><span class="sx">0064940B</span></div><div class="m " style="left:118.7px;top:276.4px;width:99.5px;height:12px;"><span class="sx">    90</span></div><div class="m " style="left:221.8px;top:276.4px;width:237.5px;height:12px;"><span class="sx"><span class="g">NOP</span></span></div><div class="m g" style="left:66px;top:288.4px;width:50px;height:12px;"><span class="sx">0064940C</span></div><div class="m " style="left:118.7px;top:288.4px;width:99.5px;height:12px;"><span class="sx">    90</span></div><div class="m " style="left:221.8px;top:288.4px;width:237.5px;height:12px;"><span class="sx"><span class="g">NOP</span></span></div><div class="m g" style="left:66px;top:300.4px;width:50px;height:12px;"><span class="sx">0064940D</span></div><div class="m " style="left:118.7px;top:300.4px;width:99.5px;height:12px;"><span class="sx">    90</span></div><div class="m " style="left:221.8px;top:300.4px;width:237.5px;height:12px;"><span class="sx"><span class="g">NOP</span></span></div><div class="m g" style="left:66px;top:312.4px;width:50px;height:12px;"><span class="sx">0064940E</span></div><div class="m " style="left:118.7px;top:312.4px;width:99.5px;height:12px;"><span class="sx">    90</span></div><div class="m " style="left:221.8px;top:312.4px;width:237.5px;height:12px;"><span class="sx"><span class="g">NOP</span></span></div><div class="m g" style="left:66px;top:324.4px;width:50px;height:12px;"><span class="sx">0064940F</span></div><div class="m " style="left:118.7px;top:324.4px;width:99.5px;height:12px;"><span class="sx">    90</span></div><div class="m " style="left:221.8px;top:324.4px;width:237.5px;height:12px;"><span class="sx"><span class="g">NOP</span></span></div><div class="m g" style="left:66px;top:336.4px;width:50px;height:12px;"><span class="sx">00649410</span></div><div class="m " style="left:118.7px;top:336.4px;width:99.5px;height:12px;"><span class="sx"><span class="dr">    B8 01000000</span></span></div><div class="m " style="left:221.8px;top:336.4px;width:237.5px;height:12px;"><span class="sx"><span class="dr">MOV EAX,1</span></span></div><div style="left:64px;top:348.4px;width:669px;height:12px;background:#c0c0c0"></div><div class="m k" style="left:66px;top:348.4px;width:50px;height:12px;"><span class="sx">00649415</span></div><div class="m " style="left:118.7px;top:348.4px;width:99.5px;height:12px;"><span class="sx"> .  56</span></div><div class="m " style="left:221.8px;top:348.4px;width:237.5px;height:12px;"><span class="sx"><span class="nv">PUSH</span> ESI</span></div><div class="m g" style="left:66px;top:360.4px;width:50px;height:12px;"><span class="sx">00649416</span></div><div class="m " style="left:118.7px;top:360.4px;width:99.5px;height:12px;"><span class="sx"> .  85C0</span></div><div class="m " style="left:221.8px;top:360.4px;width:237.5px;height:12px;"><span class="sx">TEST EAX,EAX</span></div><div class="m g" style="left:66px;top:372.4px;width:50px;height:12px;"><span class="sx">00649418</span></div><div class="m " style="left:118.7px;top:372.4px;width:99.5px;height:12px;"><span class="sx"> .  8BF1</span></div><div class="m " style="left:221.8px;top:372.4px;width:237.5px;height:12px;"><span class="sx">MOV ESI,ECX</span></div><div class="m g" style="left:66px;top:384.4px;width:50px;height:12px;"><span class="sx">0064941A</span></div><div class="m " style="left:118.7px;top:384.4px;width:99.5px;height:12px;"><span class="sx"> .v 74 76</span></div><div class="m " style="left:221.8px;top:384.4px;width:237.5px;height:12px;"><span class="sx"><span class="dr yl">JE</span><span class="yl"> SHORT TdxW.00649492</span></span></div><div class="m g" style="left:66px;top:396.4px;width:50px;height:12px;"><span class="sx">0064941C</span></div><div class="m " style="left:118.7px;top:396.4px;width:99.5px;height:12px;"><span class="sx"> .  8B86 DE000000</span></div><div class="m " style="left:221.8px;top:396.4px;width:237.5px;height:12px;"><span class="sx">MOV EAX,<span class="nv">DWORD PTR DS:[ESI+DE]</span></span></div><div class="m g" style="left:66px;top:408.4px;width:50px;height:12px;"><span class="sx">00649422</span></div><div class="m " style="left:118.7px;top:408.4px;width:99.5px;height:12px;"><span class="sx"> .  85C0</span></div><div class="m " style="left:221.8px;top:408.4px;width:237.5px;height:12px;"><span class="sx">TEST EAX,EAX</span></div><div class="m g" style="left:66px;top:420.4px;width:50px;height:12px;"><span class="sx">00649424</span></div><div class="m " style="left:118.7px;top:420.4px;width:99.5px;height:12px;"><span class="sx"> .v 75 6C</span></div><div class="m " style="left:221.8px;top:420.4px;width:237.5px;height:12px;"><span class="sx"><span class="dr yl">JNZ</span><span class="yl"> SHORT TdxW.00649492</span></span></div><div class="m g" style="left:66px;top:432.4px;width:50px;height:12px;"><span class="sx">00649426</span></div><div class="m " style="left:118.7px;top:432.4px;width:99.5px;height:12px;"><span class="sx"> .  A1 C831A500</span></div><div class="m " style="left:221.8px;top:432.4px;width:237.5px;height:12px;"><span class="sx">MOV EAX,<span class="nv">DWORD PTR DS:[A531C8]</span></span></div><div class="m g" style="left:66px;top:444.4px;width:50px;height:12px;"><span class="sx">0064942B</span></div><div class="m " style="left:118.7px;top:444.4px;width:99.5px;height:12px;"><span class="sx"> .  85C0</span></div><div class="m " style="left:221.8px;top:444.4px;width:237.5px;height:12px;"><span class="sx">TEST EAX,EAX</span></div><div class="m g" style="left:66px;top:456.4px;width:50px;height:12px;"><span class="sx">0064942D</span></div><div class="m " style="left:118.7px;top:456.4px;width:99.5px;height:12px;"><span class="sx"> .v 74 63</span></div><div class="m " style="left:221.8px;top:456.4px;width:237.5px;height:12px;"><span class="sx"><span class="dr yl">JE</span><span class="yl"> SHORT TdxW.00649492</span></span></div><div class="m g" style="left:66px;top:468.4px;width:50px;height:12px;"><span class="sx">0064942F</span></div><div class="m " style="left:118.7px;top:468.4px;width:99.5px;height:12px;"><span class="sx"> .  8B4424 08</span></div><div class="m " style="left:221.8px;top:468.4px;width:237.5px;height:12px;"><span class="sx">MOV EAX,<span class="nv cy">DWORD PTR SS:[ESP+8]</span></span></div><div class="m g" style="left:66px;top:480.4px;width:50px;height:12px;"><span class="sx">00649433</span></div><div class="m " style="left:118.7px;top:480.4px;width:99.5px;height:12px;"><span class="sx"> .  85C0</span></div><div class="m " style="left:221.8px;top:480.4px;width:237.5px;height:12px;"><span class="sx">TEST EAX,EAX</span></div><div class="m g" style="left:66px;top:492.4px;width:50px;height:12px;"><span class="sx">00649435</span></div><div class="m " style="left:118.7px;top:492.4px;width:99.5px;height:12px;"><span class="sx"> .v 75 49</span></div><div class="m " style="left:221.8px;top:492.4px;width:237.5px;height:12px;"><span class="sx"><span class="dr yl">JNZ</span><span class="yl"> SHORT TdxW.00649480</span></span></div><div class="m g" style="left:66px;top:504.4px;width:50px;height:12px;"><span class="sx">00649437</span></div><div class="m " style="left:118.7px;top:504.4px;width:99.5px;height:12px;"><span class="sx"> .  8B46 14</span></div><div class="m " style="left:221.8px;top:504.4px;width:237.5px;height:12px;"><span class="sx">MOV EAX,<span class="nv">DWORD PTR DS:[ESI+14]</span></span></div><div class="m g" style="left:66px;top:516.4px;width:50px;height:12px;"><span class="sx">0064943A</span></div><div class="m " style="left:118.7px;top:516.4px;width:99.5px;height:12px;"><span class="sx"> .  6A 00</span></div><div class="m " style="left:221.8px;top:516.4px;width:237.5px;height:12px;"><span class="sx"><span class="nv">PUSH</span> <span class="ol">0</span></span></div><div class="m g" style="left:66px;top:528.4px;width:50px;height:12px;"><span class="sx">0064943C</span></div><div class="m " style="left:118.7px;top:528.4px;width:99.5px;height:12px;"><span class="sx"> .  6A 00</span></div><div class="m " style="left:221.8px;top:528.4px;width:237.5px;height:12px;"><span class="sx"><span class="nv">PUSH</span> <span class="ol">0</span></span></div><div class="m g" style="left:66px;top:540.4px;width:50px;height:12px;"><span class="sx">0064943E</span></div><div class="m " style="left:118.7px;top:540.4px;width:99.5px;height:12px;"><span class="sx"> .  68 D20F0000</span></div><div class="m " style="left:221.8px;top:540.4px;width:237.5px;height:12px;"><span class="sx"><span class="nv">PUSH</span> <span class="ol">0FD2</span></span></div><div class="m g" style="left:66px;top:552.4px;width:50px;height:12px;"><span class="sx">00649443</span></div><div class="m " style="left:118.7px;top:552.4px;width:99.5px;height:12px;"><span class="sx"> .  8B48 20</span></div><div class="m " style="left:221.8px;top:552.4px;width:237.5px;height:12px;"><span class="sx">MOV ECX,<span class="nv">DWORD PTR DS:[EAX+20]</span></span></div><div class="m g" style="left:66px;top:564.4px;width:50px;height:12px;"><span class="sx">00649446</span></div><div class="m " style="left:118.7px;top:564.4px;width:99.5px;height:12px;"><span class="sx"> .  51</span></div><div class="m " style="left:221.8px;top:564.4px;width:237.5px;height:12px;"><span class="sx"><span class="nv">PUSH</span> ECX</span></div><div class="m g" style="left:66px;top:576.4px;width:50px;height:12px;"><span class="sx">00649447</span></div><div class="m " style="left:118.7px;top:576.4px;width:99.5px;height:12px;"><span class="sx"> .  FF15 30F56B00</span></div><div class="m " style="left:221.8px;top:576.4px;width:237.5px;height:12px;"><span class="sx"><span class="cy">CALL</span> DWORD PTR DS:[&lt;&amp;USER32.SendMessageA&gt;]</span></div><div class="m g" style="left:66px;top:588.4px;width:50px;height:12px;"><span class="sx">0064944D</span></div><div class="m " style="left:118.7px;top:588.4px;width:99.5px;height:12px;"><span class="sx"> .  66:8B56 1C</span></div><div class="m " style="left:221.8px;top:588.4px;width:237.5px;height:12px;"><span class="sx">MOV DX,<span class="nv">WORD PTR DS:[ESI+1C]</span></span></div><div class="m g" style="left:66px;top:600.4px;width:50px;height:12px;"><span class="sx">00649451</span></div><div class="m " style="left:118.7px;top:600.4px;width:99.5px;height:12px;"><span class="sx"> .  6A 00</span></div><div class="m " style="left:221.8px;top:600.4px;width:237.5px;height:12px;"><span class="sx"><span class="nv">PUSH</span> <span class="ol">0</span></span></div><div class="m g" style="left:66px;top:612.4px;width:50px;height:12px;"><span class="sx">00649453</span></div><div class="m " style="left:118.7px;top:612.4px;width:99.5px;height:12px;"><span class="sx"> .  52</span></div><div class="m " style="left:221.8px;top:612.4px;width:237.5px;height:12px;"><span class="sx"><span class="nv">PUSH</span> EDX</span></div><div class="m g" style="left:66px;top:624.4px;width:50px;height:12px;"><span class="sx">00649454</span></div><div class="m " style="left:118.7px;top:624.4px;width:99.5px;height:12px;"><span class="sx">    E8 0753E6FF</span></div><div class="m " style="left:221.8px;top:624.4px;width:237.5px;height:12px;"><span class="sx"><span class="g">CALL TdxW.004AE760</span></span></div><div class="m g" style="left:66px;top:636.4px;width:50px;height:12px;"><span class="sx">00649459</span></div><div class="m " style="left:118.7px;top:636.4px;width:99.5px;height:12px;"><span class="sx">    8B0D C431A500</span></div><div class="m " style="left:221.8px;top:636.4px;width:237.5px;height:12px;"><span class="sx"><span class="g">MOV ECX,DWORD PTR DS:[A531C4]</span></span></div><div class="m g" style="left:66px;top:648.4px;width:50px;height:12px;"><span class="sx">0064945F</span></div><div class="m " style="left:118.7px;top:648.4px;width:99.5px;height:12px;"><span class="sx">    83C4 08</span></div><div class="m " style="left:221.8px;top:648.4px;width:237.5px;height:12px;"><span class="sx"><span class="g">ADD ESP,8</span></span></div><div style="left:119.6px;top:349.4px;width:2px;height:274px;background:#000"></div><div class="m " style="left:468.3px;top:516.4px;width:264px;height:12px;"><span class="sx"><span class="g">lParam</span> = 0</span></div><div class="m " style="left:468.3px;top:528.4px;width:264px;height:12px;"><span class="sx"><span class="g">wParam</span> = 0</span></div><div class="m " style="left:468.3px;top:540.4px;width:264px;height:12px;"><span class="sx"><span class="g">Message</span> = MSG(FD2)</span></div><div class="m " style="left:468.3px;top:564.4px;width:264px;height:12px;"><span class="sx"><span class="g">hWnd</span></span></div><div class="m " style="left:468.3px;top:576.4px;width:264px;height:12px;"><span class="sx"><span class="dr">SendMessageA</span></span></div><div style="left:464px;top:518.4px;width:2px;height:68px;background:#000"></div><div style="left:464px;top:518.4px;width:4px;height:2px;background:#000"></div><div style="left:464px;top:584.4px;width:4px;height:2px;background:#000"></div><div style="left:733px;top:43.3px;width:18px;height:618px;background:#ececec;border-left:1px solid #fafafa"></div><div class="arr up" style="left:739px;top:49.5px;border-width:0 4px 5px 4px"></div><div class="arr dn" style="left:739px;top:649px;border-width:5px 4px 0 4px"></div><div style="left:734px;top:532px;width:16px;height:16px;background:linear-gradient(90deg,#f6f6f6,#dadada);border:1px solid #a8a8a8;border-radius:2px"></div><div style="left:751px;top:43.3px;width:1.2px;height:621px;background:#181818"></div><div style="left:64px;top:660px;width:687.5px;height:1.8px;background:#181818"></div><div class="hdr" style="left:752px;top:43.3px;width:62px;height:15.5px;"></div><div class="m " style="left:755.5px;top:45px;width:58px;height:12px;"><span class="sx"><svg class="cj"><use href="#u5bc4"/></svg><svg class="cj"><use href="#u5b58"/></svg><svg class="cj"><use href="#u5668"/></svg> (FPU)</span></div><div class="m " style="left:755.9px;top:60.4px;width:57.60000000000002px;height:12px;"><span class="sx"><span class="g">EAX </span><span class="dr">00000000</span></span></div><div class="m " style="left:755.9px;top:72.4px;width:57.60000000000002px;height:12px;"><span class="sx"><span class="g">ECX </span><span class="dr">0012FFB0</span></span></div><div class="m " style="left:755.9px;top:84.4px;width:57.60000000000002px;height:12px;"><span class="sx"><span class="g">EDX </span><span class="dr">7C92E514</span></span></div><div class="m " style="left:755.9px;top:96.4px;width:57.60000000000002px;height:12px;"><span class="sx"><span class="g">EBX 7FFDF000</span></span></div><div class="m " style="left:755.9px;top:108.4px;width:57.60000000000002px;height:12px;"><span class="sx"><span class="g">ESP </span><span class="dr">0012FFC4</span></span></div><div class="m " style="left:755.9px;top:120.4px;width:57.60000000000002px;height:12px;"><span class="sx"><span class="g">EBP </span><span class="dr">0012FFF0</span></span></div><div class="m " style="left:755.9px;top:132.4px;width:57.60000000000002px;height:12px;"><span class="sx"><span class="g">ESI FFFFFFFF</span></span></div><div class="m " style="left:755.9px;top:144.4px;width:57.60000000000002px;height:12px;"><span class="sx"><span class="g">EDI 7C930228</span></span></div><div class="m " style="left:755.9px;top:162.4px;width:57.60000000000002px;height:12px;"><span class="sx"><span class="g">EIP </span><span class="dr">006A1D22</span></span></div><div class="m " style="left:755.9px;top:180.4px;width:57.60000000000002px;height:12px;"><span class="sx"><span class="g">C 0  ES 0023</span></span></div><div class="m " style="left:755.9px;top:192.4px;width:57.60000000000002px;height:12px;"><span class="sx"><span class="g">P </span><span class="dr">1</span><span class="g">  CS 001B</span></span></div><div class="m " style="left:755.9px;top:204.4px;width:57.60000000000002px;height:12px;"><span class="sx"><span class="g">A 0  SS 0023</span></span></div><div class="m " style="left:755.9px;top:216.4px;width:57.60000000000002px;height:12px;"><span class="sx"><span class="g">Z </span><span class="dr">1</span><span class="g">  DS 0023</span></span></div><div class="m " style="left:755.9px;top:228.4px;width:57.60000000000002px;height:12px;"><span class="sx"><span class="g">S 0  FS </span><span class="dr">003B</span></span></div><div class="m " style="left:755.9px;top:240.4px;width:57.60000000000002px;height:12px;"><span class="sx"><span class="g">T 0  GS 0000</span></span></div><div class="m " style="left:755.9px;top:252.4px;width:57.60000000000002px;height:12px;"><span class="sx"><span class="g">D 0</span></span></div><div class="m " style="left:755.9px;top:264.4px;width:57.60000000000002px;height:12px;"><span class="sx"><span class="g">O 0  LastErr</span></span></div><div class="m " style="left:755.9px;top:282.4px;width:57.60000000000002px;height:12px;"><span class="sx"><span class="g">EFL </span><span class="dr">00000246</span></span></div><div class="m " style="left:755.9px;top:300.4px;width:57.60000000000002px;height:12px;"><span class="sx"><span class="g">ST0 </span><span class="g">empty</span></span></div><div class="m " style="left:755.9px;top:312.4px;width:57.60000000000002px;height:12px;"><span class="sx"><span class="g">ST1 </span><span class="g">empty</span></span></div><div class="m " style="left:755.9px;top:324.4px;width:57.60000000000002px;height:12px;"><span class="sx"><span class="g">ST2 </span><span class="g">empty</span></span></div><div class="m " style="left:755.9px;top:336.4px;width:57.60000000000002px;height:12px;"><span class="sx"><span class="g">ST3 </span><span class="g">empty</span></span></div><div class="m " style="left:755.9px;top:348.4px;width:57.60000000000002px;height:12px;"><span class="sx"><span class="g">ST4 </span><span class="g">empty</span></span></div><div class="m " style="left:755.9px;top:360.4px;width:57.60000000000002px;height:12px;"><span class="sx"><span class="g">ST5 </span><span class="g">empty</span></span></div><div class="m " style="left:755.9px;top:372.4px;width:57.60000000000002px;height:12px;"><span class="sx"><span class="g">ST6 </span><span class="g">empty</span></span></div><div class="m " style="left:755.9px;top:384.4px;width:57.60000000000002px;height:12px;"><span class="sx"><span class="g">ST7 </span><span class="g">empty</span></span></div><div class="m " style="left:755.9px;top:408.4px;width:57.60000000000002px;height:12px;"><span class="sx"><span class="g">FST </span><span class="dr">4000</span></span></div><div class="m " style="left:755.9px;top:420.4px;width:57.60000000000002px;height:12px;"><span class="sx"><span class="g">FCW 027F</span></span></div><div style="left:64px;top:661.8px;width:750px;height:40px;background:#e8e8e8"></div><div class="hdr" style="left:64px;top:664.6px;width:618px;height:15.5px;"></div><div class="m " style="left:66px;top:666.5px;width:48px;height:12px;"><span class="sx"><svg class="cj"><use href="#u5730"/></svg><svg class="cj"><use href="#u5740"/></svg></span></div><div class="m " style="left:120px;top:666.5px;width:200px;height:12px;"><span class="sx">HEX <svg class="cj"><use href="#u6570"/></svg><svg class="cj"><use href="#u636e"/></svg></span></div><div class="m " style="left:409px;top:666.5px;width:98px;height:12px;"><span class="sx">ASCII</span></div><div style="left:116px;top:664.6px;width:1.6px;height:15.5px;background:#202020"></div><div style="left:405px;top:664.6px;width:1.6px;height:15.5px;background:#202020"></div><div style="left:508px;top:664.6px;width:1.6px;height:15.5px;background:#202020"></div><div style="left:64px;top:680.1px;width:618px;height:5px;background:#fffbf0"></div><div style="left:64px;top:680.1px;width:618px;height:4px;overflow:hidden"><div class="m " style="left:2px;top:1.5px;width:50px;height:12px;top:1.5px"><span class="sx">00730000</span></div><div class="m " style="left:54px;top:1.5px;width:290px;height:12px;"><span class="sx">25 64 00 00 25 73 00 00 25 39 64 00 25 31 32 64</span></div><div class="m " style="left:345px;top:1.5px;width:100px;height:12px;"><span class="sx">%d..%s..%9d.%12d</span></div></div><div style="left:682px;top:662px;width:16px;height:25px;background:#eeeeee"></div><div class="arr up" style="left:687px;top:667px;border-width:0 3px 4px 3px"></div><div class="arr dn" style="left:687px;top:679px;border-width:4px 3px 0 3px"></div><div style="left:700px;top:662px;width:114px;height:25px;background:#fffbf0"></div><div style="left:700.5px;top:665.5px;width:53px;height:11px;background:#000"></div><div class="m " style="left:701.5px;top:665px;width:52px;height:12px;color:#fff"><span class="sx">0012FFC4</span></div><div style="left:753.5px;top:665.5px;width:42.5px;height:11px;background:#c8c8c8"></div><div class="m g" style="left:757px;top:665px;width:39px;height:12px;"><span class="sx">7C817077</span></div><div class="m " style="left:701.5px;top:677px;width:52px;height:12px;"><span class="sx">0012FFC8</span></div><div class="m g" style="left:757px;top:677px;width:39px;height:12px;"><span class="sx">7C930228</span></div><div style="left:796px;top:662px;width:18px;height:25px;background:#eeeeee"></div><div class="arr up" style="left:801px;top:667px;border-width:0 3px 4px 3px"></div><div class="arr dn" style="left:801px;top:679px;border-width:4px 3px 0 3px"></div><div style="left:818.5px;top:50.2px;width:450.5px;height:530.3px;background:#2a68b8;border:1px solid #103a78;border-left:0;border-radius:0 7px 0 0"></div><div style="left:818.5px;top:51.2px;width:449.5px;height:22px;background:repeating-linear-gradient(120deg,#1b55a2 0px,#1b55a2 70px,#2e6bb8 80px,#3573be 110px,#1f5ca8 122px,#1b55a2 150px,#2563ae 175px,#1b55a2 190px);border-radius:0 6px 0 0"></div><div style="left:821.5px;top:56.5px;width:14.5px;height:14px;background:linear-gradient(135deg,#c8ecfc,#58b0e4);border:1px solid #9fd4f4"><div class="ic" style="font-style:normal;font-family:'Liberation Mono';font-size:12px;font-weight:bold">P</div></div><div class="ttl" style="left:845px;top:57.5px;width:300px;height:14px;color:#1a1a6a"><span class="sx"><svg class="cj"><use href="#u8d85"/></svg><svg class="cj"><use href="#u7ea7"/></svg><svg class="cj"><use href="#u5b57"/></svg><svg class="cj"><use href="#u4e32"/></svg><svg class="cj"><use href="#u53c2"/></svg><svg class="cj"><use href="#u8003"/></svg>+</span></div><div style="left:1168.5px;top:51px;width:25px;height:19px;background:linear-gradient(#7ea4da,#5e88c6 50%,#4e78b6 51%,#6e94ce);border:1px solid #d4e2f8;border-radius:0 0 0 4px;"><div class="bmin"></div></div><div style="left:1193.5px;top:51px;width:26px;height:19px;background:linear-gradient(#7ea4da,#5e88c6 50%,#4e78b6 51%,#6e94ce);border:1px solid #d4e2f8;"><div class="bmax"></div></div><div style="left:1219.5px;top:51px;width:42.5px;height:19px;background:linear-gradient(#7ea4da,#5e88c6 50%,#4e78b6 51%,#6e94ce);border:1px solid #d4e2f8;border-radius:0 0 4px 0;"><div class="bx">x</div></div><div style="left:819px;top:73.5px;width:446px;height:502.4px;background:#fffbf0;border-left:1px solid #f4f8ff"></div><div class="hdr" style="left:819px;top:73.5px;width:429px;height:15.8px;"></div><div class="m " style="left:822px;top:75.5px;width:48px;height:12px;"><span class="sx"><svg class="cj"><use href="#u5730"/></svg><svg class="cj"><use href="#u5740"/></svg></span></div><div class="m " style="left:875.5px;top:75.5px;width:200px;height:12px;"><span class="sx"><svg class="cj"><use href="#u53cd"/></svg><svg class="cj"><use href="#u6c47"/></svg><svg class="cj"><use href="#u7f16"/></svg></span></div><div class="m " style="left:1116px;top:75.5px;width:130px;height:12px;"><span class="sx"><svg class="cj"><use href="#u6587"/></svg><svg class="cj"><use href="#u672c"/></svg><svg class="cj"><use href="#u5b57"/></svg><svg class="cj"><use href="#u4e32"/></svg></span></div><div style="left:871.5px;top:73.5px;width:1.6px;height:15.8px;background:#202020"></div><div style="left:872.0px;top:89.3px;width:1px;height:486.59999999999997px;background:#909090"></div><div style="left:1112.8px;top:73.5px;width:1.6px;height:15.8px;background:#202020"></div><div style="left:1113.3px;top:89.3px;width:1px;height:486.59999999999997px;background:#909090"></div><div style="left:820px;top:89.3px;width:52px;height:486.59999999999997px;background:#fdfdfb"></div><div style="left:819px;top:89.3px;width:429px;height:486.59999999999997px;overflow:hidden"><div class="m " style="left:2px;top:1.6000000000000085px;width:50px;height:12px;"><span class="sx">006488E4</span></div><div class="m " style="left:57px;top:1.6000000000000085px;width:237px;height:12px;"><span class="sx">PUSH TdxW.0070080C</span></div><div class="m " style="left:297px;top:1.6000000000000085px;width:132px;height:12px;"><span class="sx">%d</span></div><div class="m " style="left:2px;top:13.600000000000009px;width:50px;height:12px;"><span class="sx">0064891B</span></div><div class="m " style="left:57px;top:13.600000000000009px;width:237px;height:12px;"><span class="sx">PUSH TdxW.00700A24</span></div><div class="m " style="left:297px;top:13.600000000000009px;width:132px;height:12px;"><span class="sx">%s</span></div><div class="m " style="left:2px;top:25.60000000000001px;width:50px;height:12px;"><span class="sx">00648A22</span></div><div class="m " style="left:57px;top:25.60000000000001px;width:237px;height:12px;"><span class="sx">PUSH TdxW.0070C6F8</span></div><div class="m " style="left:297px;top:25.60000000000001px;width:132px;height:12px;"><span class="sx">%9d</span></div><div class="m " style="left:2px;top:37.60000000000001px;width:50px;height:12px;"><span class="sx">00648A52</span></div><div class="m " style="left:57px;top:37.60000000000001px;width:237px;height:12px;"><span class="sx">MOV DWORD PTR SS:[ESP+50],TdxW.00730AA4</span></div><div class="m " style="left:297px;top:37.60000000000001px;width:132px;height:12px;"><span class="sx">%12d</span></div><div class="m " style="left:2px;top:49.60000000000001px;width:50px;height:12px;"><span class="sx">00648A5F</span></div><div class="m " style="left:57px;top:49.60000000000001px;width:237px;height:12px;"><span class="sx">MOV DWORD PTR SS:[ESP+50],TdxW.00730A9C</span></div><div class="m " style="left:297px;top:49.60000000000001px;width:132px;height:12px;"><span class="sx">%12d.%d</span></div><div class="m " style="left:2px;top:61.60000000000001px;width:50px;height:12px;"><span class="sx">00648A6F</span></div><div class="m " style="left:57px;top:61.60000000000001px;width:237px;height:12px;"><span class="sx">MOV DWORD PTR SS:[ESP+50],TdxW.00730A90</span></div><div class="m " style="left:297px;top:61.60000000000001px;width:132px;height:12px;"><span class="sx">%12d.%02d</span></div><div class="m " style="left:2px;top:73.60000000000001px;width:50px;height:12px;"><span class="sx">00648AE8</span></div><div class="m " style="left:57px;top:73.60000000000001px;width:237px;height:12px;"><span class="sx">PUSH TdxW.0071F6F4</span></div><div class="m " style="left:297px;top:73.60000000000001px;width:132px;height:12px;"><span class="sx">b</span></div><div class="m " style="left:2px;top:85.60000000000001px;width:50px;height:12px;"><span class="sx">00648B0A</span></div><div class="m " style="left:57px;top:85.60000000000001px;width:237px;height:12px;"><span class="sx">PUSH TdxW.0070B5F4</span></div><div class="m " style="left:297px;top:85.60000000000001px;width:132px;height:12px;"><span class="sx">s</span></div><div class="m " style="left:2px;top:97.60000000000001px;width:50px;height:12px;"><span class="sx">00648B93</span></div><div class="m " style="left:57px;top:97.60000000000001px;width:237px;height:12px;"><span class="sx">PUSH TdxW.00730A74</span></div><div class="m " style="left:297px;top:97.60000000000001px;width:132px;height:12px;"><span class="sx"><svg class="cj"><use href="#u8be5"/></svg><svg class="cj"><use href="#u54c1"/></svg><svg class="cj"><use href="#u79cd"/></svg><svg class="cj"><use href="#u65e0"/></svg><svg class="cj"><use href="#u9010"/></svg><svg class="cj"><use href="#u7b14"/></svg><svg class="cj"><use href="#u6210"/></svg><svg class="cj"><use href="#u4ea4"/></svg><svg class="cj"><use href="#u660e"/></svg><svg class="cj"><use href="#u7ec6"/></svg><svg class="cj"><use href="#u6570"/></svg><svg class="cj"><use href="#u636e"/></svg></span></div><div class="m " style="left:2px;top:109.60000000000001px;width:50px;height:12px;"><span class="sx">00648C10</span></div><div class="m " style="left:57px;top:109.60000000000001px;width:237px;height:12px;"><span class="sx">MOV DWORD PTR DS:[7008E4],TdxW.006BF9E8</span></div><div class="m " style="left:297px;top:109.60000000000001px;width:132px;height:12px;"><span class="sx">,</span></div><div class="m " style="left:2px;top:121.60000000000001px;width:50px;height:12px;"><span class="sx">00648C20</span></div><div class="m " style="left:57px;top:121.60000000000001px;width:237px;height:12px;"><span class="sx">MOV DWORD PTR DS:[7008EC],TdxW.006BFAF0</span></div><div class="m " style="left:297px;top:121.60000000000001px;width:132px;height:12px;"><span class="sx">,</span></div><div class="m " style="left:2px;top:133.60000000000002px;width:50px;height:12px;"><span class="sx">00648C30</span></div><div class="m " style="left:57px;top:133.60000000000002px;width:237px;height:12px;"><span class="sx">MOV DWORD PTR DS:[7008F4],TdxW.006BFBF8</span></div><div class="m " style="left:297px;top:133.60000000000002px;width:132px;height:12px;"><span class="sx">,</span></div><div class="m " style="left:2px;top:145.60000000000002px;width:50px;height:12px;"><span class="sx">00648C40</span></div><div class="m " style="left:57px;top:145.60000000000002px;width:237px;height:12px;"><span class="sx">MOV DWORD PTR DS:[7008FC],TdxW.006BFD00</span></div><div class="m " style="left:297px;top:145.60000000000002px;width:132px;height:12px;"><span class="sx">,</span></div><div class="m " style="left:2px;top:157.60000000000002px;width:50px;height:12px;"><span class="sx">00648C50</span></div><div class="m " style="left:57px;top:157.60000000000002px;width:237px;height:12px;"><span class="sx">MOV DWORD PTR DS:[700904],TdxW.006BFE08</span></div><div class="m " style="left:297px;top:157.60000000000002px;width:132px;height:12px;"><span class="sx">,</span></div><div class="m " style="left:2px;top:169.59999999999997px;width:50px;height:12px;"><span class="sx">00648C60</span></div><div class="m " style="left:57px;top:169.59999999999997px;width:237px;height:12px;"><span class="sx">MOV DWORD PTR DS:[70090C],TdxW.006BFF10</span></div><div class="m " style="left:297px;top:169.59999999999997px;width:132px;height:12px;"><span class="sx">,</span></div><div class="m " style="left:2px;top:181.59999999999997px;width:50px;height:12px;"><span class="sx">00648D48</span></div><div class="m " style="left:57px;top:181.59999999999997px;width:237px;height:12px;"><span class="sx">MOV DWORD PTR DS:[EDI],TdxW.0050C050</span></div><div class="m " style="left:297px;top:181.59999999999997px;width:132px;height:12px;"><span class="sx">p</span></div><div class="m " style="left:2px;top:193.59999999999997px;width:50px;height:12px;"><span class="sx">00648D76</span></div><div class="m " style="left:57px;top:193.59999999999997px;width:237px;height:12px;"><span class="sx">MOV DWORD PTR DS:[ESI+21C],TdxW.005050F8</span></div><div class="m " style="left:297px;top:193.59999999999997px;width:132px;height:12px;"><span class="sx">#r</span></div><div class="m " style="left:2px;top:205.59999999999997px;width:50px;height:12px;"><span class="sx">00648EF6</span></div><div class="m " style="left:57px;top:205.59999999999997px;width:237px;height:12px;"><span class="sx">MOV DWORD PTR SS:[ESP+10],TdxW.006C2EAC</span></div><div class="m " style="left:297px;top:205.59999999999997px;width:132px;height:12px;"><span class="sx">h\nj</span></div><div class="m " style="left:2px;top:217.59999999999997px;width:50px;height:12px;"><span class="sx">006490E8</span></div><div class="m " style="left:57px;top:217.59999999999997px;width:237px;height:12px;"><span class="sx">MOV DWORD PTR SS:[ESP+10],TdxW.006C2EAC</span></div><div class="m " style="left:297px;top:217.59999999999997px;width:132px;height:12px;"><span class="sx">h\nj</span></div><div style="left:0;top:229.59999999999997px;width:429px;height:12px;background:#c0c0c0"></div><div class="m " style="left:2px;top:229.59999999999997px;width:50px;height:12px;"><span class="sx">0064985F</span></div><div class="m " style="left:57px;top:229.59999999999997px;width:237px;height:12px;"><span class="sx">PUSH TdxW.00730B90</span></div><div class="m " style="left:297px;top:229.59999999999997px;width:132px;height:12px;"><span class="sx"><svg class="cj"><use href="#u997c"/></svg></span></div><div class="m " style="left:2px;top:241.59999999999997px;width:50px;height:12px;"><span class="sx">00649878</span></div><div class="m " style="left:57px;top:241.59999999999997px;width:237px;height:12px;"><span class="sx">PUSH TdxW.00730B8C</span></div><div class="m " style="left:297px;top:241.59999999999997px;width:132px;height:12px;"><span class="sx"><svg class="cj"><use href="#u67f1"/></svg></span></div><div class="m " style="left:2px;top:253.59999999999997px;width:50px;height:12px;"><span class="sx">006498A7</span></div><div class="m " style="left:57px;top:253.59999999999997px;width:237px;height:12px;"><span class="sx">PUSH TdxW.00730B88</span></div><div class="m " style="left:297px;top:253.59999999999997px;width:132px;height:12px;"><span class="sx"><svg class="cj"><use href="#u5355"/></svg></span></div><div class="m " style="left:2px;top:265.59999999999997px;width:50px;height:12px;"><span class="sx">006498C1</span></div><div class="m " style="left:57px;top:265.59999999999997px;width:237px;height:12px;"><span class="sx">PUSH TdxW.00730B84</span></div><div class="m " style="left:297px;top:265.59999999999997px;width:132px;height:12px;"><span class="sx"><svg class="cj"><use href="#u91cf"/></svg></span></div><div class="m " style="left:2px;top:277.59999999999997px;width:50px;height:12px;"><span class="sx">006498EF</span></div><div class="m " style="left:57px;top:277.59999999999997px;width:237px;height:12px;"><span class="sx">PUSH TdxW.00730B80</span></div><div class="m " style="left:297px;top:277.59999999999997px;width:132px;height:12px;"><span class="sx"><svg class="cj"><use href="#u4ec5"/></svg></span></div><div class="m " style="left:2px;top:289.59999999999997px;width:50px;height:12px;"><span class="sx">00649918</span></div><div class="m " style="left:57px;top:289.59999999999997px;width:237px;height:12px;"><span class="sx">PUSH TdxW.007036E0</span></div><div class="m " style="left:297px;top:289.59999999999997px;width:132px;height:12px;"><span class="sx"><svg class="cj"><use href="#u4e3b"/></svg></span></div><div class="m " style="left:2px;top:301.59999999999997px;width:50px;height:12px;"><span class="sx">0064993D</span></div><div class="m " style="left:57px;top:301.59999999999997px;width:237px;height:12px;"><span class="sx">PUSH TdxW.00730B7C</span></div><div class="m " style="left:297px;top:301.59999999999997px;width:132px;height:12px;"><span class="sx"><svg class="cj"><use href="#u52a8"/></svg></span></div><div class="m " style="left:2px;top:313.59999999999997px;width:50px;height:12px;"><span class="sx">00649952</span></div><div class="m " style="left:57px;top:313.59999999999997px;width:237px;height:12px;"><span class="sx">PUSH TdxW.00730B78</span></div><div class="m " style="left:297px;top:313.59999999999997px;width:132px;height:12px;"><span class="sx"><svg class="cj"><use href="#u5168"/></svg></span></div><div class="m " style="left:2px;top:325.59999999999997px;width:50px;height:12px;"><span class="sx">0064997B</span></div><div class="m " style="left:57px;top:325.59999999999997px;width:237px;height:12px;"><span class="sx">PUSH TdxW.00730B74</span></div><div class="m " style="left:297px;top:325.59999999999997px;width:132px;height:12px;"><span class="sx"><svg class="cj"><use href="#u90e8"/></svg></span></div><div class="m " style="left:2px;top:337.59999999999997px;width:50px;height:12px;"><span class="sx">006499BE</span></div><div class="m " style="left:57px;top:337.59999999999997px;width:237px;height:12px;"><span class="sx">PUSH TdxW.00730B5C</span></div><div class="m " style="left:297px;top:337.59999999999997px;width:132px;height:12px;"><span class="sx"><svg class="cj"><use href="#u9f99"/></svg><svg class="cj"><use href="#u864e"/></svg><svg class="cj"><use href="#u770b"/></svg><svg class="cj"><use href="#u76d8"/></svg>(<svg class="cj"><use href="#u6210"/></svg><svg class="cj"><use href="#u4ea4"/></svg><svg class="cj"><use href="#u91cf"/></svg>/<svg class="cj"><use href="#u6309"/></svg><svg class="cj"><use href="#u6240"/></svg><svg class="cj"><use href="#u6709"/></svg>)</span></div><div class="m " style="left:2px;top:349.59999999999997px;width:50px;height:12px;"><span class="sx">006499DA</span></div><div class="m " style="left:57px;top:349.59999999999997px;width:237px;height:12px;"><span class="sx">PUSH TdxW.00730B44</span></div><div class="m " style="left:297px;top:349.59999999999997px;width:132px;height:12px;"><span class="sx"><svg class="cj"><use href="#u9f99"/></svg><svg class="cj"><use href="#u864e"/></svg><svg class="cj"><use href="#u770b"/></svg><svg class="cj"><use href="#u76d8"/></svg>(<svg class="cj"><use href="#u6210"/></svg><svg class="cj"><use href="#u4ea4"/></svg><svg class="cj"><use href="#u91cf"/></svg>/<svg class="cj"><use href="#u6309"/></svg><svg class="cj"><use href="#u4e3b"/></svg><svg class="cj"><use href="#u52a8"/></svg>)</span></div><div class="m " style="left:2px;top:361.59999999999997px;width:50px;height:12px;"><span class="sx">006499FA</span></div><div class="m " style="left:57px;top:361.59999999999997px;width:237px;height:12px;"><span class="sx">PUSH TdxW.00730B2C</span></div><div class="m " style="left:297px;top:361.59999999999997px;width:132px;height:12px;"><span class="sx"><svg class="cj"><use href="#u9f99"/></svg><svg class="cj"><use href="#u864e"/></svg><svg class="cj"><use href="#u770b"/></svg><svg class="cj"><use href="#u76d8"/></svg>(<svg class="cj"><use href="#u5355"/></svg><svg class="cj"><use href="#u6570"/></svg>/<svg class="cj"><use href="#u6309"/></svg><svg class="cj"><use href="#u6240"/></svg><svg class="cj"><use href="#u6709"/></svg>)</span></div><div class="m " style="left:2px;top:373.59999999999997px;width:50px;height:12px;"><span class="sx">00649A17</span></div><div class="m " style="left:57px;top:373.59999999999997px;width:237px;height:12px;"><span class="sx">PUSH TdxW.00730B14</span></div><div class="m " style="left:297px;top:373.59999999999997px;width:132px;height:12px;"><span class="sx"><svg class="cj"><use href="#u9f99"/></svg><svg class="cj"><use href="#u864e"/></svg><svg class="cj"><use href="#u770b"/></svg><svg class="cj"><use href="#u76d8"/></svg>(<svg class="cj"><use href="#u5355"/></svg><svg class="cj"><use href="#u6570"/></svg>/<svg class="cj"><use href="#u6309"/></svg><svg class="cj"><use href="#u4e3b"/></svg><svg class="cj"><use href="#u52a8"/></svg>)</span></div><div class="m " style="left:2px;top:385.59999999999997px;width:50px;height:12px;"><span class="sx">00649A3E</span></div><div class="m " style="left:57px;top:385.59999999999997px;width:237px;height:12px;"><span class="sx">PUSH TdxW.00730B5C</span></div><div class="m " style="left:297px;top:385.59999999999997px;width:132px;height:12px;"><span class="sx"><svg class="cj"><use href="#u9f99"/></svg><svg class="cj"><use href="#u864e"/></svg><svg class="cj"><use href="#u770b"/></svg><svg class="cj"><use href="#u76d8"/></svg>(<svg class="cj"><use href="#u6210"/></svg><svg class="cj"><use href="#u4ea4"/></svg><svg class="cj"><use href="#u91cf"/></svg>/<svg class="cj"><use href="#u6309"/></svg><svg class="cj"><use href="#u6240"/></svg><svg class="cj"><use href="#u6709"/></svg>)</span></div><div class="m " style="left:2px;top:397.59999999999997px;width:50px;height:12px;"><span class="sx">00649A57</span></div><div class="m " style="left:57px;top:397.59999999999997px;width:237px;height:12px;"><span class="sx">PUSH TdxW.00730B44</span></div><div class="m " style="left:297px;top:397.59999999999997px;width:132px;height:12px;"><span class="sx"><svg class="cj"><use href="#u9f99"/></svg><svg class="cj"><use href="#u864e"/></svg><svg class="cj"><use href="#u770b"/></svg><svg class="cj"><use href="#u76d8"/></svg>(<svg class="cj"><use href="#u6210"/></svg><svg class="cj"><use href="#u4ea4"/></svg><svg class="cj"><use href="#u91cf"/></svg>/<svg class="cj"><use href="#u6309"/></svg><svg class="cj"><use href="#u4e3b"/></svg><svg class="cj"><use href="#u52a8"/></svg>)</span></div><div class="m " style="left:2px;top:409.59999999999997px;width:50px;height:12px;"><span class="sx">00649A75</span></div><div class="m " style="left:57px;top:409.59999999999997px;width:237px;height:12px;"><span class="sx">PUSH TdxW.00730B2C</span></div><div class="m " style="left:297px;top:409.59999999999997px;width:132px;height:12px;"><span class="sx"><svg class="cj"><use href="#u9f99"/></svg><svg class="cj"><use href="#u864e"/></svg><svg class="cj"><use href="#u770b"/></svg><svg class="cj"><use href="#u76d8"/></svg>(<svg class="cj"><use href="#u5355"/></svg><svg class="cj"><use href="#u6570"/></svg>/<svg class="cj"><use href="#u6309"/></svg><svg class="cj"><use href="#u6240"/></svg><svg class="cj"><use href="#u6709"/></svg>)</span></div><div class="m " style="left:2px;top:421.59999999999997px;width:50px;height:12px;"><span class="sx">00649A8E</span></div><div class="m " style="left:57px;top:421.59999999999997px;width:237px;height:12px;"><span class="sx">PUSH TdxW.00730B14</span></div><div class="m " style="left:297px;top:421.59999999999997px;width:132px;height:12px;"><span class="sx"><svg class="cj"><use href="#u9f99"/></svg><svg class="cj"><use href="#u864e"/></svg><svg class="cj"><use href="#u770b"/></svg><svg class="cj"><use href="#u76d8"/></svg>(<svg class="cj"><use href="#u5355"/></svg><svg class="cj"><use href="#u6570"/></svg>/<svg class="cj"><use href="#u6309"/></svg><svg class="cj"><use href="#u4e3b"/></svg><svg class="cj"><use href="#u52a8"/></svg>)</span></div><div class="m " style="left:2px;top:433.59999999999997px;width:50px;height:12px;"><span class="sx">00649C79</span></div><div class="m " style="left:57px;top:433.59999999999997px;width:237px;height:12px;"><span class="sx">PUSH TdxW.00730BA4</span></div><div class="m " style="left:297px;top:433.59999999999997px;width:132px;height:12px;"><span class="sx"><svg class="cj"><use href="#u5927"/></svg></span></div><div class="m " style="left:2px;top:445.59999999999997px;width:50px;height:12px;"><span class="sx">00649CA3</span></div><div class="m " style="left:57px;top:445.59999999999997px;width:237px;height:12px;"><span class="sx">PUSH TdxW.00730BA0</span></div><div class="m " style="left:297px;top:445.59999999999997px;width:132px;height:12px;"><span class="sx"><svg class="cj"><use href="#u4e2d"/></svg></span></div><div class="m " style="left:2px;top:457.59999999999997px;width:50px;height:12px;"><span class="sx">00649CCA</span></div><div class="m " style="left:57px;top:457.59999999999997px;width:237px;height:12px;"><span class="sx">PUSH TdxW.00730B9C</span></div><div class="m " style="left:297px;top:457.59999999999997px;width:132px;height:12px;"><span class="sx"><svg class="cj"><use href="#u5c0f"/></svg></span></div><div class="m " style="left:2px;top:469.59999999999997px;width:50px;height:12px;"><span class="sx">00649CF5</span></div><div class="m " style="left:57px;top:469.59999999999997px;width:237px;height:12px;"><span class="sx">PUSH TdxW.00730BA4</span></div><div class="m " style="left:297px;top:469.59999999999997px;width:132px;height:12px;"><span class="sx"><svg class="cj"><use href="#u5927"/></svg></span></div><div class="m " style="left:2px;top:481.59999999999997px;width:50px;height:12px;"><span class="sx">00649D1C</span></div><div class="m " style="left:57px;top:481.59999999999997px;width:237px;height:12px;"><span class="sx">PUSH TdxW.00730BA0</span></div><div class="m " style="left:297px;top:481.59999999999997px;width:132px;height:12px;"><span class="sx"><svg class="cj"><use href="#u4e2d"/></svg></span></div></div><div style="left:1248px;top:73.5px;width:17px;height:502.4px;background:linear-gradient(90deg,#edf2fa,#f7f1ea);border-left:1px solid #fff"></div><div class="arr up" style="left:1251.5px;top:79px"></div><div class="arr dn" style="left:1251.5px;top:563px"></div><div style="left:1249px;top:505.5px;width:15px;height:14px;background:linear-gradient(90deg,#e4eefa,#b8d2f2);border:1px solid #80a0c8;border-radius:2px"></div><div style="left:813.5px;top:41.5px;width:5.5px;height:660px;background:linear-gradient(90deg,#164890,#3a80d0 50%,#164890)"></div><div style="left:0px;top:683.6px;width:1280px;height:26px;background:#f0f0f0"></div><div style="left:0px;top:683.6px;width:1280px;height:1.2px;background:#fcfcfc"></div><div class="s13" style="left:4px;top:690px;width:60px;height:14px"><svg class="cj"><use href="#u547d"/></svg><svg class="cj"><use href="#u4ee4"/></svg></div><div class="s13" style="left:33px;top:690px;width:14px;height:14px"><svg class="cj"><use href="#uff1a"/></svg></div><div style="left:61.5px;top:687.5px;width:198px;height:18.5px;background:#fff;border-top:2px solid #6c6c6c;border-left:2px solid #6c6c6c;border-right:1px solid #b0b0b0;border-bottom:1px solid #e8e8e8"></div><div style="left:240.5px;top:689.5px;width:18px;height:15.5px;background:#f4f4f4;border-right:2px solid #5a5a5a;border-bottom:2px solid #5a5a5a;border-top:1px solid #fff;border-left:1px solid #fff"></div><div class="arr dn" style="left:245px;top:694.5px;border-width:5px 4px 0 4px;border-top-color:#000"></div><div style="left:264.5px;top:687.5px;width:1013.5px;height:20px;background:#f4f4f4;border-top:2px solid #aaaaaa;border-left:2px solid #aaaaaa;border-right:1px solid #fff"></div><div style="left:0px;top:710.4px;width:1280px;height:18px;background:#c0c0c0;border-top:1px solid #8a8a8a"></div><div class="s13" style="left:4.3px;top:713.8px;width:200px;height:14px;"><svg class="cj"><use href="#u5171"/></svg><svg class="cj"><use href="#u627e"/></svg><svg class="cj"><use href="#u5230"/></svg><svg class="cj"><use href="#u5b57"/></svg><svg class="cj"><use href="#u4e32"/></svg><svg class="cj"><use href="#uff1a"/></svg></div><div class="s13" style="left:84.5px;top:713.8px;width:200px;height:14px;">14278</div><div class="s13" style="left:131.5px;top:713.8px;width:200px;height:14px;">-</div><div class="s13" style="left:151.8px;top:713.8px;width:200px;height:14px;"><svg class="cj"><use href="#u8d85"/></svg><svg class="cj"><use href="#u7ea7"/></svg><svg class="cj"><use href="#u5b57"/></svg><svg class="cj"><use href="#u4e32"/></svg><svg class="cj"><use href="#u53c2"/></svg><svg class="cj"><use href="#u8003"/></svg><svg class="cj"><use href="#u5341"/></svg></div><div class="s13" style="left:250.5px;top:713.8px;width:200px;height:14px;">(ASCII</div><div class="s13" style="left:297.5px;top:713.8px;width:200px;height:14px;"><svg class="cj"><use href="#u6a21"/></svg><svg class="cj"><use href="#u5f0f"/></svg></div><div class="s13" style="left:324.5px;top:713.8px;width:200px;height:14px;">)</div><div style="left:1145px;top:710.4px;width:2.5px;height:18px;background:#f4f4f4"></div><div style="left:1188.5px;top:710.4px;width:2.5px;height:18px;background:#f4f4f4"></div><div style="left:1191px;top:711.4px;width:89px;height:17px;background:#ffff00;border-left:1px solid #8a8a8a;border-top:1px solid #8a8a8a"></div><div class="s13" style="left:1194px;top:713.8px;width:60px;height:14px;color:#d02000"><svg class="cj"><use href="#u6682"/></svg><svg class="cj"><use href="#u505c"/></svg></div>
</div>
</body></html>
